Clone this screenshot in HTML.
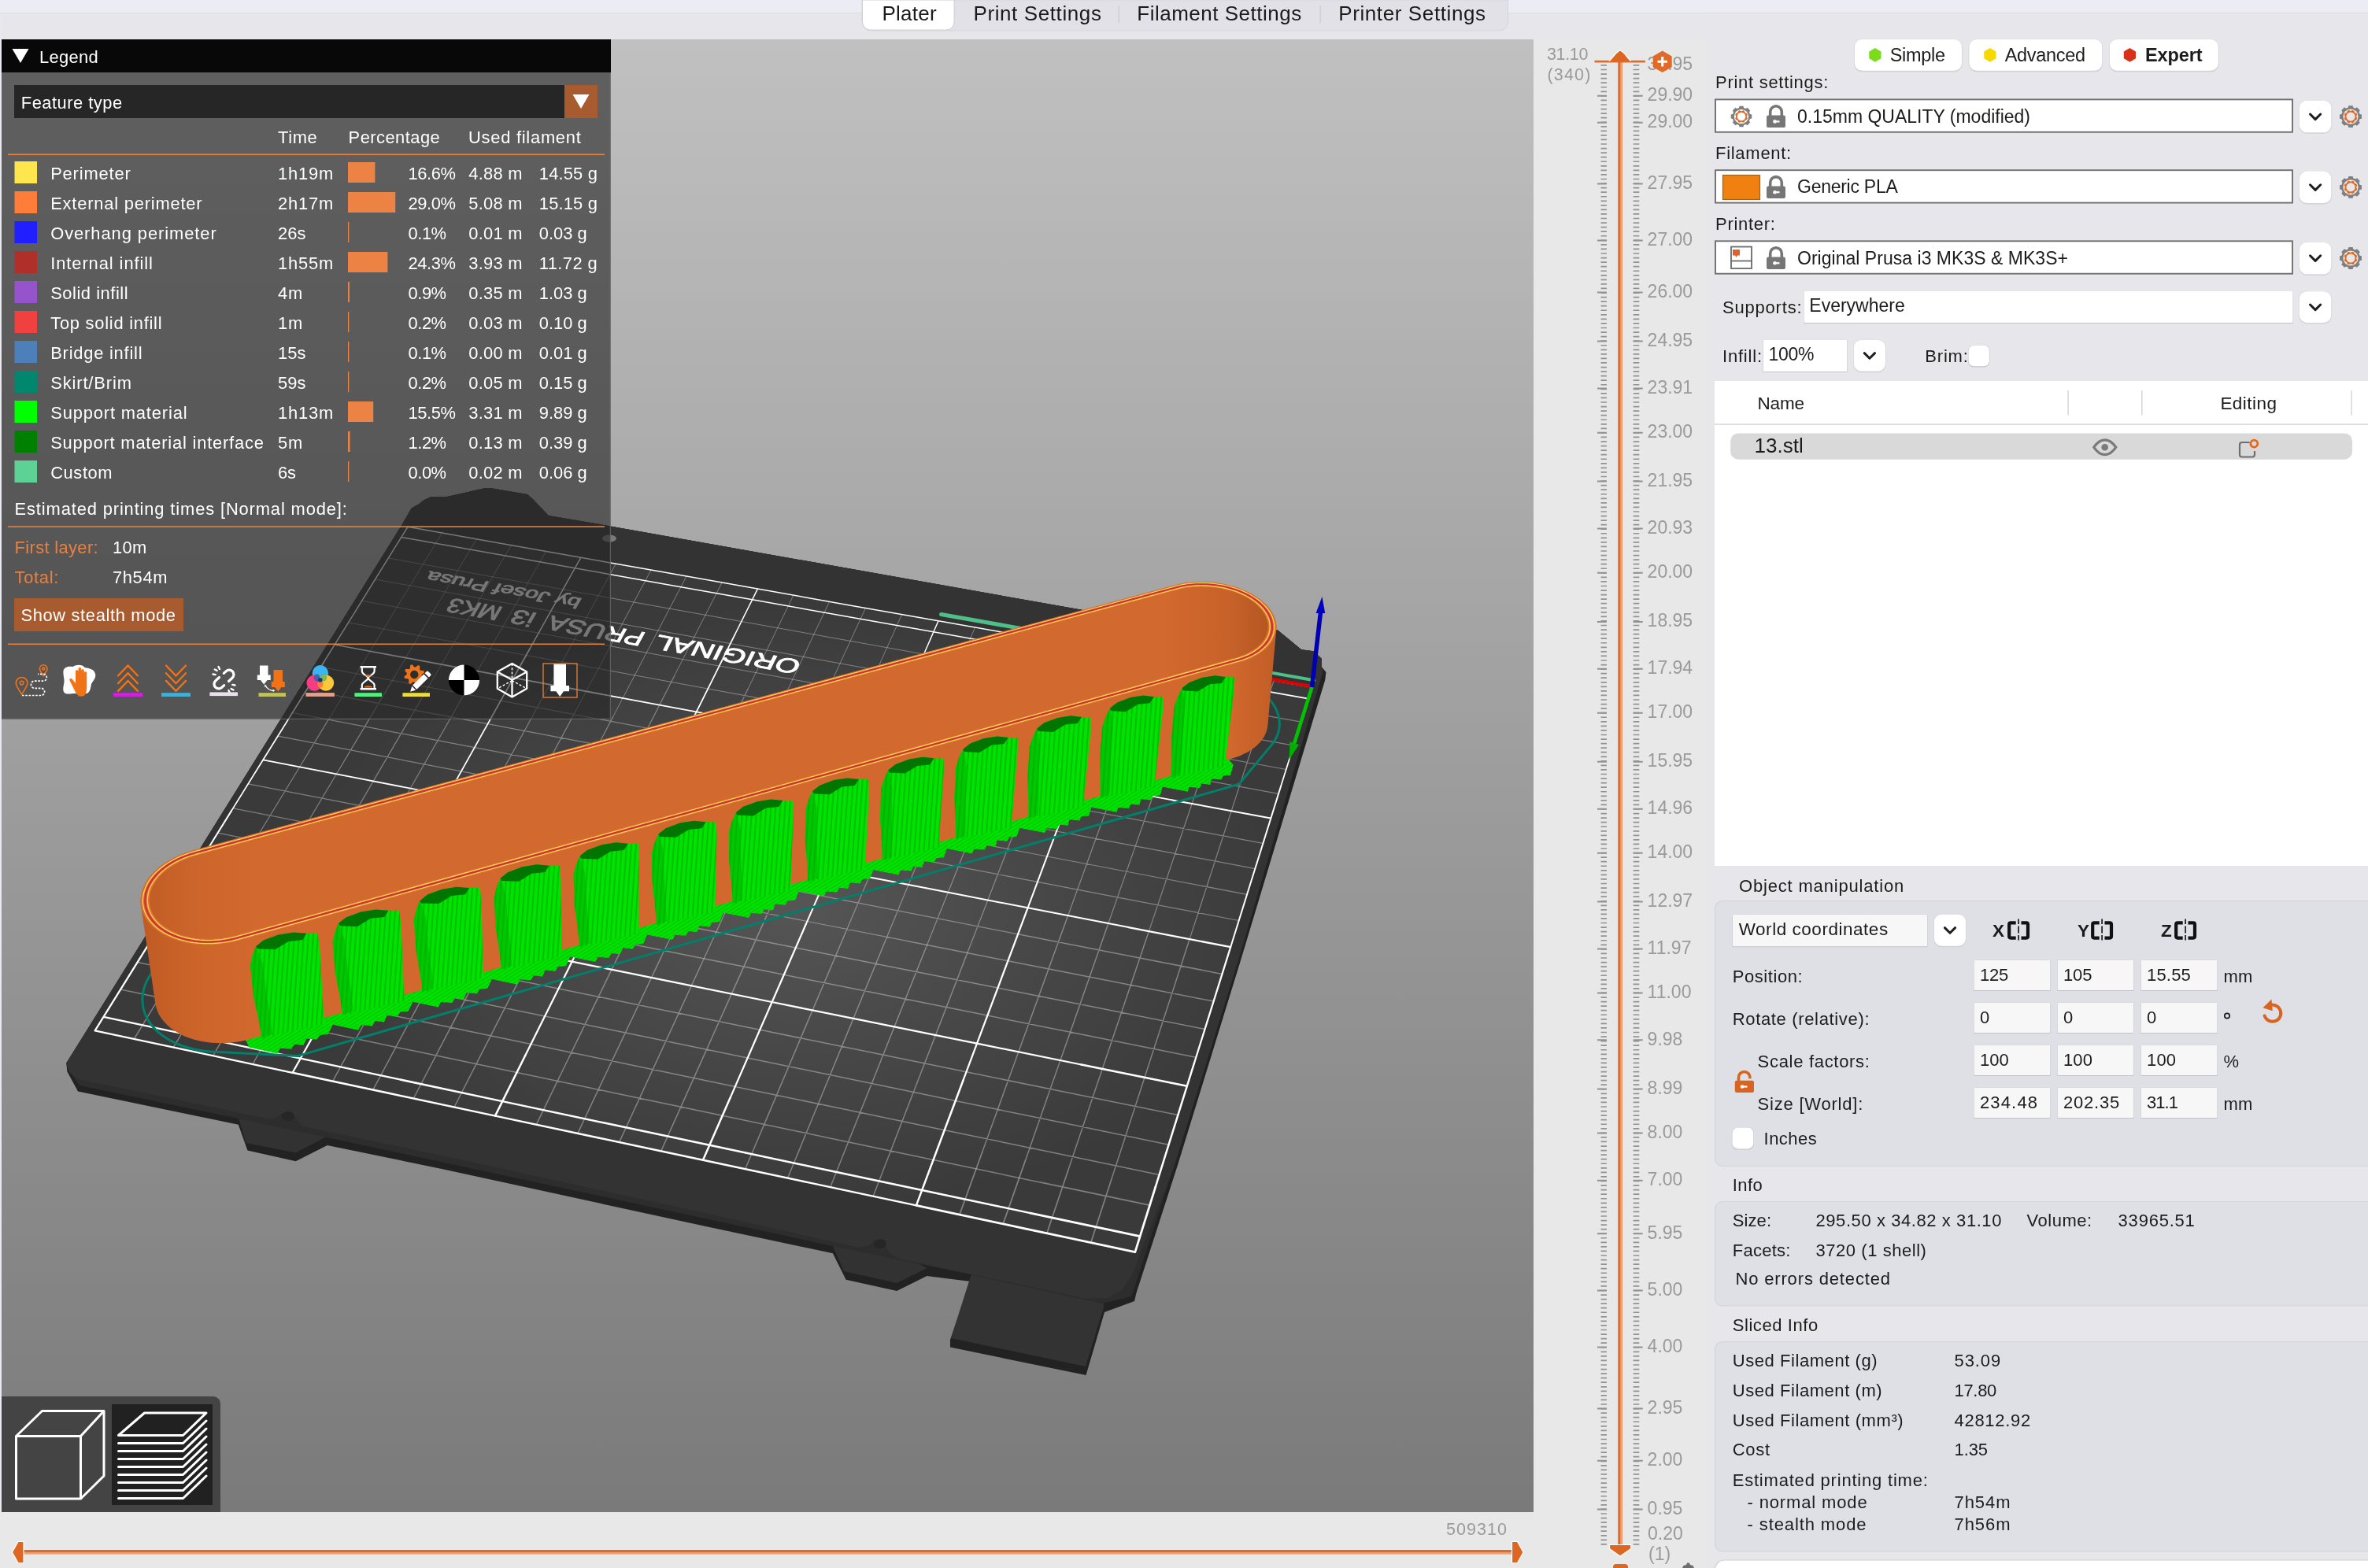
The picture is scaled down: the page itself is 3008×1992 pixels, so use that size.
<!DOCTYPE html><html><head><meta charset="utf-8"><title>PrusaSlicer</title>
<style>html{margin:0;padding:0;background:#e6e6eb}body{margin:0;padding:0;background:#e6e6eb;width:3008px;height:1992px;overflow:hidden;position:relative;font-family:"Liberation Sans",sans-serif}svg{position:absolute;left:0;top:0;will-change:transform}svg text{font-family:"Liberation Sans",sans-serif;white-space:pre}</style></head><body>
<svg width="3008" height="1992" viewBox="0 0 3008 1992">
<rect x="0" y="17" width="2" height="1975" fill="#e8e8ee"/>
<rect x="0.0" y="0.0" width="3008.0" height="17.0" rx="0.0" fill="#ececf4" />
<rect x="0.0" y="16.0" width="3008.0" height="1.2" rx="0.0" fill="#dcdce3" />
<path d="M1095 0H1915.5V28a11 11 0 0 1 -11 11H1106a11 11 0 0 1 -11 -11Z" fill="#e1e1e7" stroke="#d4d4da" stroke-width="1"/>
<path d="M1095.5 0H1212V28a10 10 0 0 1 -10 10H1105.5a10 10 0 0 1 -10 -10Z" fill="#ffffff" stroke="#cfcfd4" stroke-width="1"/>
<text x="1120.4" y="25.8" font-size="26.00" fill="#1b1b1b" letter-spacing="0.279">Plater</text>
<text x="1236.5" y="25.8" font-size="26.00" fill="#1b1b1b" letter-spacing="0.597">Print Settings</text>
<text x="1444.3" y="25.8" font-size="26.00" fill="#1b1b1b" letter-spacing="0.501">Filament Settings</text>
<text x="1700.2" y="25.8" font-size="26.00" fill="#1b1b1b" letter-spacing="0.609">Printer Settings</text>
<rect x="1420.5" y="7.0" width="1.5" height="22.0" rx="0.0" fill="#cfcfd5" />
<rect x="1676.5" y="7.0" width="1.5" height="22.0" rx="0.0" fill="#cfcfd5" />
<rect x="0.0" y="1921.0" width="1948.0" height="71.0" rx="0.0" fill="#e8e8e8" />
<rect x="28.0" y="1969.0" width="1895.0" height="3.0" rx="0.0" fill="#e06a26" />
<rect x="28.0" y="1972.0" width="1895.0" height="2.6" rx="0.0" fill="#f0a070" />
<path d="M30 1958.500H23L15.500 1972L23 1985.500H30Z" fill="#dd6622" stroke="#fff" stroke-width="1.200"/>
<path d="M1920.500 1958.500H1927.500L1935 1972L1927.500 1985.500H1920.500Z" fill="#dd6622" stroke="#fff" stroke-width="1.200"/>
<text x="1837.0" y="1950.0" font-size="21.50" fill="#9a9a9a" letter-spacing="1.043">509310</text>
<rect x="1948.0" y="50.0" width="220.0" height="1942.0" rx="0.0" fill="#e8e8e8" />
<path d="M2033.500 82.96H2041M2074.700 82.96H2082.300M2033.500 88.52H2041M2074.700 88.52H2082.300M2033.500 94.08H2041M2074.700 94.08H2082.300M2033.500 99.64H2041M2074.700 99.64H2082.300M2033.500 105.20H2041M2074.700 105.20H2082.300M2033.500 110.75H2041M2074.700 110.75H2082.300M2033.500 116.31H2041M2074.700 116.31H2082.300M2033.500 121.87H2041M2074.700 121.87H2082.300M2033.500 127.43H2041M2074.700 127.43H2082.300M2033.500 132.99H2041M2074.700 132.99H2082.300M2033.500 138.55H2041M2074.700 138.55H2082.300M2033.500 144.11H2041M2074.700 144.11H2082.300M2033.500 149.67H2041M2074.700 149.67H2082.300M2033.500 155.23H2041M2074.700 155.23H2082.300M2033.500 160.79H2041M2074.700 160.79H2082.300M2033.500 166.34H2041M2074.700 166.34H2082.300M2033.500 171.90H2041M2074.700 171.90H2082.300M2033.500 177.46H2041M2074.700 177.46H2082.300M2033.500 183.02H2041M2074.700 183.02H2082.300M2033.500 188.58H2041M2074.700 188.58H2082.300M2033.500 194.14H2041M2074.700 194.14H2082.300M2033.500 199.70H2041M2074.700 199.70H2082.300M2033.500 205.26H2041M2074.700 205.26H2082.300M2033.500 210.82H2041M2074.700 210.82H2082.300M2033.500 216.38H2041M2074.700 216.38H2082.300M2033.500 221.93H2041M2074.700 221.93H2082.300M2033.500 227.49H2041M2074.700 227.49H2082.300M2033.500 233.05H2041M2074.700 233.05H2082.300M2033.500 238.61H2041M2074.700 238.61H2082.300M2033.500 244.17H2041M2074.700 244.17H2082.300M2033.500 249.73H2041M2074.700 249.73H2082.300M2033.500 255.29H2041M2074.700 255.29H2082.300M2033.500 260.85H2041M2074.700 260.85H2082.300M2033.500 266.41H2041M2074.700 266.41H2082.300M2033.500 271.97H2041M2074.700 271.97H2082.300M2033.500 277.52H2041M2074.700 277.52H2082.300M2033.500 283.08H2041M2074.700 283.08H2082.300M2033.500 288.64H2041M2074.700 288.64H2082.300M2033.500 294.20H2041M2074.700 294.20H2082.300M2033.500 299.76H2041M2074.700 299.76H2082.300M2033.500 305.32H2041M2074.700 305.32H2082.300M2033.500 310.88H2041M2074.700 310.88H2082.300M2033.500 316.44H2041M2074.700 316.44H2082.300M2033.500 322.00H2041M2074.700 322.00H2082.300M2033.500 327.56H2041M2074.700 327.56H2082.300M2033.500 333.11H2041M2074.700 333.11H2082.300M2033.500 338.67H2041M2074.700 338.67H2082.300M2033.500 344.23H2041M2074.700 344.23H2082.300M2033.500 349.79H2041M2074.700 349.79H2082.300M2033.500 355.35H2041M2074.700 355.35H2082.300M2033.500 360.91H2041M2074.700 360.91H2082.300M2033.500 366.47H2041M2074.700 366.47H2082.300M2033.500 372.03H2041M2074.700 372.03H2082.300M2033.500 377.59H2041M2074.700 377.59H2082.300M2033.500 383.15H2041M2074.700 383.15H2082.300M2033.500 388.70H2041M2074.700 388.70H2082.300M2033.500 394.26H2041M2074.700 394.26H2082.300M2033.500 399.82H2041M2074.700 399.82H2082.300M2033.500 405.38H2041M2074.700 405.38H2082.300M2033.500 410.94H2041M2074.700 410.94H2082.300M2033.500 416.50H2041M2074.700 416.50H2082.300M2033.500 422.06H2041M2074.700 422.06H2082.300M2033.500 427.62H2041M2074.700 427.62H2082.300M2033.500 433.18H2041M2074.700 433.18H2082.300M2033.500 438.74H2041M2074.700 438.74H2082.300M2033.500 444.29H2041M2074.700 444.29H2082.300M2033.500 449.85H2041M2074.700 449.85H2082.300M2033.500 455.41H2041M2074.700 455.41H2082.300M2033.500 460.97H2041M2074.700 460.97H2082.300M2033.500 466.53H2041M2074.700 466.53H2082.300M2033.500 472.09H2041M2074.700 472.09H2082.300M2033.500 477.65H2041M2074.700 477.65H2082.300M2033.500 483.21H2041M2074.700 483.21H2082.300M2033.500 488.77H2041M2074.700 488.77H2082.300M2033.500 494.32H2041M2074.700 494.32H2082.300M2033.500 499.88H2041M2074.700 499.88H2082.300M2033.500 505.44H2041M2074.700 505.44H2082.300M2033.500 511.00H2041M2074.700 511.00H2082.300M2033.500 516.56H2041M2074.700 516.56H2082.300M2033.500 522.12H2041M2074.700 522.12H2082.300M2033.500 527.68H2041M2074.700 527.68H2082.300M2033.500 533.24H2041M2074.700 533.24H2082.300M2033.500 538.80H2041M2074.700 538.80H2082.300M2033.500 544.36H2041M2074.700 544.36H2082.300M2033.500 549.91H2041M2074.700 549.91H2082.300M2033.500 555.47H2041M2074.700 555.47H2082.300M2033.500 561.03H2041M2074.700 561.03H2082.300M2033.500 566.59H2041M2074.700 566.59H2082.300M2033.500 572.15H2041M2074.700 572.15H2082.300M2033.500 577.71H2041M2074.700 577.71H2082.300M2033.500 583.27H2041M2074.700 583.27H2082.300M2033.500 588.83H2041M2074.700 588.83H2082.300M2033.500 594.39H2041M2074.700 594.39H2082.300M2033.500 599.95H2041M2074.700 599.95H2082.300M2033.500 605.51H2041M2074.700 605.51H2082.300M2033.500 611.06H2041M2074.700 611.06H2082.300M2033.500 616.62H2041M2074.700 616.62H2082.300M2033.500 622.18H2041M2074.700 622.18H2082.300M2033.500 627.74H2041M2074.700 627.74H2082.300M2033.500 633.30H2041M2074.700 633.30H2082.300M2033.500 638.86H2041M2074.700 638.86H2082.300M2033.500 644.42H2041M2074.700 644.42H2082.300M2033.500 649.98H2041M2074.700 649.98H2082.300M2033.500 655.54H2041M2074.700 655.54H2082.300M2033.500 661.10H2041M2074.700 661.10H2082.300M2033.500 666.65H2041M2074.700 666.65H2082.300M2033.500 672.21H2041M2074.700 672.21H2082.300M2033.500 677.77H2041M2074.700 677.77H2082.300M2033.500 683.33H2041M2074.700 683.33H2082.300M2033.500 688.89H2041M2074.700 688.89H2082.300M2033.500 694.45H2041M2074.700 694.45H2082.300M2033.500 700.01H2041M2074.700 700.01H2082.300M2033.500 705.57H2041M2074.700 705.57H2082.300M2033.500 711.13H2041M2074.700 711.13H2082.300M2033.500 716.68H2041M2074.700 716.68H2082.300M2033.500 722.24H2041M2074.700 722.24H2082.300M2033.500 727.80H2041M2074.700 727.80H2082.300M2033.500 733.36H2041M2074.700 733.36H2082.300M2033.500 738.92H2041M2074.700 738.92H2082.300M2033.500 744.48H2041M2074.700 744.48H2082.300M2033.500 750.04H2041M2074.700 750.04H2082.300M2033.500 755.60H2041M2074.700 755.60H2082.300M2033.500 761.16H2041M2074.700 761.16H2082.300M2033.500 766.72H2041M2074.700 766.72H2082.300M2033.500 772.28H2041M2074.700 772.28H2082.300M2033.500 777.83H2041M2074.700 777.83H2082.300M2033.500 783.39H2041M2074.700 783.39H2082.300M2033.500 788.95H2041M2074.700 788.95H2082.300M2033.500 794.51H2041M2074.700 794.51H2082.300M2033.500 800.07H2041M2074.700 800.07H2082.300M2033.500 805.63H2041M2074.700 805.63H2082.300M2033.500 811.19H2041M2074.700 811.19H2082.300M2033.500 816.75H2041M2074.700 816.75H2082.300M2033.500 822.31H2041M2074.700 822.31H2082.300M2033.500 827.87H2041M2074.700 827.87H2082.300M2033.500 833.42H2041M2074.700 833.42H2082.300M2033.500 838.98H2041M2074.700 838.98H2082.300M2033.500 844.54H2041M2074.700 844.54H2082.300M2033.500 850.10H2041M2074.700 850.10H2082.300M2033.500 855.66H2041M2074.700 855.66H2082.300M2033.500 861.22H2041M2074.700 861.22H2082.300M2033.500 866.78H2041M2074.700 866.78H2082.300M2033.500 872.34H2041M2074.700 872.34H2082.300M2033.500 877.90H2041M2074.700 877.90H2082.300M2033.500 883.45H2041M2074.700 883.45H2082.300M2033.500 889.01H2041M2074.700 889.01H2082.300M2033.500 894.57H2041M2074.700 894.57H2082.300M2033.500 900.13H2041M2074.700 900.13H2082.300M2033.500 905.69H2041M2074.700 905.69H2082.300M2033.500 911.25H2041M2074.700 911.25H2082.300M2033.500 916.81H2041M2074.700 916.81H2082.300M2033.500 922.37H2041M2074.700 922.37H2082.300M2033.500 927.93H2041M2074.700 927.93H2082.300M2033.500 933.49H2041M2074.700 933.49H2082.300M2033.500 939.05H2041M2074.700 939.05H2082.300M2033.500 944.60H2041M2074.700 944.60H2082.300M2033.500 950.16H2041M2074.700 950.16H2082.300M2033.500 955.72H2041M2074.700 955.72H2082.300M2033.500 961.28H2041M2074.700 961.28H2082.300M2033.500 966.84H2041M2074.700 966.84H2082.300M2033.500 972.40H2041M2074.700 972.40H2082.300M2033.500 977.96H2041M2074.700 977.96H2082.300M2033.500 983.52H2041M2074.700 983.52H2082.300M2033.500 989.08H2041M2074.700 989.08H2082.300M2033.500 994.63H2041M2074.700 994.63H2082.300M2033.500 1000.19H2041M2074.700 1000.19H2082.300M2033.500 1005.75H2041M2074.700 1005.75H2082.300M2033.500 1011.31H2041M2074.700 1011.31H2082.300M2033.500 1016.87H2041M2074.700 1016.87H2082.300M2033.500 1022.43H2041M2074.700 1022.43H2082.300M2033.500 1027.99H2041M2074.700 1027.99H2082.300M2033.500 1033.55H2041M2074.700 1033.55H2082.300M2033.500 1039.11H2041M2074.700 1039.11H2082.300M2033.500 1044.67H2041M2074.700 1044.67H2082.300M2033.500 1050.23H2041M2074.700 1050.23H2082.300M2033.500 1055.78H2041M2074.700 1055.78H2082.300M2033.500 1061.34H2041M2074.700 1061.34H2082.300M2033.500 1066.90H2041M2074.700 1066.90H2082.300M2033.500 1072.46H2041M2074.700 1072.46H2082.300M2033.500 1078.02H2041M2074.700 1078.02H2082.300M2033.500 1083.58H2041M2074.700 1083.58H2082.300M2033.500 1089.14H2041M2074.700 1089.14H2082.300M2033.500 1094.70H2041M2074.700 1094.70H2082.300M2033.500 1100.26H2041M2074.700 1100.26H2082.300M2033.500 1105.82H2041M2074.700 1105.82H2082.300M2033.500 1111.37H2041M2074.700 1111.37H2082.300M2033.500 1116.93H2041M2074.700 1116.93H2082.300M2033.500 1122.49H2041M2074.700 1122.49H2082.300M2033.500 1128.05H2041M2074.700 1128.05H2082.300M2033.500 1133.61H2041M2074.700 1133.61H2082.300M2033.500 1139.17H2041M2074.700 1139.17H2082.300M2033.500 1144.73H2041M2074.700 1144.73H2082.300M2033.500 1150.29H2041M2074.700 1150.29H2082.300M2033.500 1155.85H2041M2074.700 1155.85H2082.300M2033.500 1161.41H2041M2074.700 1161.41H2082.300M2033.500 1166.96H2041M2074.700 1166.96H2082.300M2033.500 1172.52H2041M2074.700 1172.52H2082.300M2033.500 1178.08H2041M2074.700 1178.08H2082.300M2033.500 1183.64H2041M2074.700 1183.64H2082.300M2033.500 1189.20H2041M2074.700 1189.20H2082.300M2033.500 1194.76H2041M2074.700 1194.76H2082.300M2033.500 1200.32H2041M2074.700 1200.32H2082.300M2033.500 1205.88H2041M2074.700 1205.88H2082.300M2033.500 1211.44H2041M2074.700 1211.44H2082.300M2033.500 1217.00H2041M2074.700 1217.00H2082.300M2033.500 1222.55H2041M2074.700 1222.55H2082.300M2033.500 1228.11H2041M2074.700 1228.11H2082.300M2033.500 1233.67H2041M2074.700 1233.67H2082.300M2033.500 1239.23H2041M2074.700 1239.23H2082.300M2033.500 1244.79H2041M2074.700 1244.79H2082.300M2033.500 1250.35H2041M2074.700 1250.35H2082.300M2033.500 1255.91H2041M2074.700 1255.91H2082.300M2033.500 1261.47H2041M2074.700 1261.47H2082.300M2033.500 1267.03H2041M2074.700 1267.03H2082.300M2033.500 1272.59H2041M2074.700 1272.59H2082.300M2033.500 1278.14H2041M2074.700 1278.14H2082.300M2033.500 1283.70H2041M2074.700 1283.70H2082.300M2033.500 1289.26H2041M2074.700 1289.26H2082.300M2033.500 1294.82H2041M2074.700 1294.82H2082.300M2033.500 1300.38H2041M2074.700 1300.38H2082.300M2033.500 1305.94H2041M2074.700 1305.94H2082.300M2033.500 1311.50H2041M2074.700 1311.50H2082.300M2033.500 1317.06H2041M2074.700 1317.06H2082.300M2033.500 1322.62H2041M2074.700 1322.62H2082.300M2033.500 1328.18H2041M2074.700 1328.18H2082.300M2033.500 1333.73H2041M2074.700 1333.73H2082.300M2033.500 1339.29H2041M2074.700 1339.29H2082.300M2033.500 1344.85H2041M2074.700 1344.85H2082.300M2033.500 1350.41H2041M2074.700 1350.41H2082.300M2033.500 1355.97H2041M2074.700 1355.97H2082.300M2033.500 1361.53H2041M2074.700 1361.53H2082.300M2033.500 1367.09H2041M2074.700 1367.09H2082.300M2033.500 1372.65H2041M2074.700 1372.65H2082.300M2033.500 1378.21H2041M2074.700 1378.21H2082.300M2033.500 1383.77H2041M2074.700 1383.77H2082.300M2033.500 1389.32H2041M2074.700 1389.32H2082.300M2033.500 1394.88H2041M2074.700 1394.88H2082.300M2033.500 1400.44H2041M2074.700 1400.44H2082.300M2033.500 1406.00H2041M2074.700 1406.00H2082.300M2033.500 1411.56H2041M2074.700 1411.56H2082.300M2033.500 1417.12H2041M2074.700 1417.12H2082.300M2033.500 1422.68H2041M2074.700 1422.68H2082.300M2033.500 1428.24H2041M2074.700 1428.24H2082.300M2033.500 1433.80H2041M2074.700 1433.80H2082.300M2033.500 1439.36H2041M2074.700 1439.36H2082.300M2033.500 1444.91H2041M2074.700 1444.91H2082.300M2033.500 1450.47H2041M2074.700 1450.47H2082.300M2033.500 1456.03H2041M2074.700 1456.03H2082.300M2033.500 1461.59H2041M2074.700 1461.59H2082.300M2033.500 1467.15H2041M2074.700 1467.15H2082.300M2033.500 1472.71H2041M2074.700 1472.71H2082.300M2033.500 1478.27H2041M2074.700 1478.27H2082.300M2033.500 1483.83H2041M2074.700 1483.83H2082.300M2033.500 1489.39H2041M2074.700 1489.39H2082.300M2033.500 1494.95H2041M2074.700 1494.95H2082.300M2033.500 1500.50H2041M2074.700 1500.50H2082.300M2033.500 1506.06H2041M2074.700 1506.06H2082.300M2033.500 1511.62H2041M2074.700 1511.62H2082.300M2033.500 1517.18H2041M2074.700 1517.18H2082.300M2033.500 1522.74H2041M2074.700 1522.74H2082.300M2033.500 1528.30H2041M2074.700 1528.30H2082.300M2033.500 1533.86H2041M2074.700 1533.86H2082.300M2033.500 1539.42H2041M2074.700 1539.42H2082.300M2033.500 1544.98H2041M2074.700 1544.98H2082.300M2033.500 1550.54H2041M2074.700 1550.54H2082.300M2033.500 1556.09H2041M2074.700 1556.09H2082.300M2033.500 1561.65H2041M2074.700 1561.65H2082.300M2033.500 1567.21H2041M2074.700 1567.21H2082.300M2033.500 1572.77H2041M2074.700 1572.77H2082.300M2033.500 1578.33H2041M2074.700 1578.33H2082.300M2033.500 1583.89H2041M2074.700 1583.89H2082.300M2033.500 1589.45H2041M2074.700 1589.45H2082.300M2033.500 1595.01H2041M2074.700 1595.01H2082.300M2033.500 1600.57H2041M2074.700 1600.57H2082.300M2033.500 1606.12H2041M2074.700 1606.12H2082.300M2033.500 1611.68H2041M2074.700 1611.68H2082.300M2033.500 1617.24H2041M2074.700 1617.24H2082.300M2033.500 1622.80H2041M2074.700 1622.80H2082.300M2033.500 1628.36H2041M2074.700 1628.36H2082.300M2033.500 1633.92H2041M2074.700 1633.92H2082.300M2033.500 1639.48H2041M2074.700 1639.48H2082.300M2033.500 1645.04H2041M2074.700 1645.04H2082.300M2033.500 1650.60H2041M2074.700 1650.60H2082.300M2033.500 1656.16H2041M2074.700 1656.16H2082.300M2033.500 1661.72H2041M2074.700 1661.72H2082.300M2033.500 1667.27H2041M2074.700 1667.27H2082.300M2033.500 1672.83H2041M2074.700 1672.83H2082.300M2033.500 1678.39H2041M2074.700 1678.39H2082.300M2033.500 1683.95H2041M2074.700 1683.95H2082.300M2033.500 1689.51H2041M2074.700 1689.51H2082.300M2033.500 1695.07H2041M2074.700 1695.07H2082.300M2033.500 1700.63H2041M2074.700 1700.63H2082.300M2033.500 1706.19H2041M2074.700 1706.19H2082.300M2033.500 1711.75H2041M2074.700 1711.75H2082.300M2033.500 1717.31H2041M2074.700 1717.31H2082.300M2033.500 1722.86H2041M2074.700 1722.86H2082.300M2033.500 1728.42H2041M2074.700 1728.42H2082.300M2033.500 1733.98H2041M2074.700 1733.98H2082.300M2033.500 1739.54H2041M2074.700 1739.54H2082.300M2033.500 1745.10H2041M2074.700 1745.10H2082.300M2033.500 1750.66H2041M2074.700 1750.66H2082.300M2033.500 1756.22H2041M2074.700 1756.22H2082.300M2033.500 1761.78H2041M2074.700 1761.78H2082.300M2033.500 1767.34H2041M2074.700 1767.34H2082.300M2033.500 1772.90H2041M2074.700 1772.90H2082.300M2033.500 1778.45H2041M2074.700 1778.45H2082.300M2033.500 1784.01H2041M2074.700 1784.01H2082.300M2033.500 1789.57H2041M2074.700 1789.57H2082.300M2033.500 1795.13H2041M2074.700 1795.13H2082.300M2033.500 1800.69H2041M2074.700 1800.69H2082.300M2033.500 1806.25H2041M2074.700 1806.25H2082.300M2033.500 1811.81H2041M2074.700 1811.81H2082.300M2033.500 1817.37H2041M2074.700 1817.37H2082.300M2033.500 1822.93H2041M2074.700 1822.93H2082.300M2033.500 1828.49H2041M2074.700 1828.49H2082.300M2033.500 1834.04H2041M2074.700 1834.04H2082.300M2033.500 1839.60H2041M2074.700 1839.60H2082.300M2033.500 1845.16H2041M2074.700 1845.16H2082.300M2033.500 1850.72H2041M2074.700 1850.72H2082.300M2033.500 1856.28H2041M2074.700 1856.28H2082.300M2033.500 1861.84H2041M2074.700 1861.84H2082.300M2033.500 1867.40H2041M2074.700 1867.40H2082.300M2033.500 1872.96H2041M2074.700 1872.96H2082.300M2033.500 1878.52H2041M2074.700 1878.52H2082.300M2033.500 1884.08H2041M2074.700 1884.08H2082.300M2033.500 1889.63H2041M2074.700 1889.63H2082.300M2033.500 1895.19H2041M2074.700 1895.19H2082.300M2033.500 1900.75H2041M2074.700 1900.75H2082.300M2033.500 1906.31H2041M2074.700 1906.31H2082.300M2033.500 1911.87H2041M2074.700 1911.87H2082.300M2033.500 1917.43H2041M2074.700 1917.43H2082.300M2033.500 1922.99H2041M2074.700 1922.99H2082.300M2033.500 1928.55H2041M2074.700 1928.55H2082.300M2033.500 1934.11H2041M2074.700 1934.11H2082.300M2033.500 1939.67H2041M2074.700 1939.67H2082.300M2033.500 1945.22H2041M2074.700 1945.22H2082.300M2033.500 1950.78H2041M2074.700 1950.78H2082.300M2033.500 1956.34H2041M2074.700 1956.34H2082.300M2033.500 1961.90H2041M2074.700 1961.90H2082.300" stroke="#929292" stroke-width="1.700" fill="none"/>
<path d="M2029 121.8H2041M2074.700 121.8H2086.700M2029 155.8H2041M2074.700 155.8H2086.700M2029 233.6H2041M2074.700 233.6H2086.700M2029 305.5H2041M2074.700 305.5H2086.700M2029 371.6H2041M2074.700 371.6H2086.700M2029 433.4H2041M2074.700 433.4H2086.700M2029 493.4H2041M2074.700 493.4H2086.700M2029 549.7H2041M2074.700 549.7H2086.700M2029 611.5H2041M2074.700 611.5H2086.700M2029 671.5H2041M2074.700 671.5H2086.700M2029 727.8H2041M2074.700 727.8H2086.700M2029 790.0H2041M2074.700 790.0H2086.700M2029 849.7H2041M2074.700 849.7H2086.700M2029 905.7H2041M2074.700 905.7H2086.700M2029 967.8H2041M2074.700 967.8H2086.700M2029 1027.7H2041M2074.700 1027.7H2086.700M2029 1083.8H2041M2074.700 1083.8H2086.700M2029 1145.6H2041M2074.700 1145.6H2086.700M2029 1205.6H2041M2074.700 1205.6H2086.700M2029 1261.6H2041M2074.700 1261.6H2086.700M2029 1321.3H2041M2074.700 1321.3H2086.700M2029 1383.4H2041M2074.700 1383.4H2086.700M2029 1439.4H2041M2074.700 1439.4H2086.700M2029 1499.7H2041M2074.700 1499.7H2086.700M2029 1567.3H2041M2074.700 1567.3H2086.700M2029 1639.6H2041M2074.700 1639.6H2086.700M2029 1711.5H2041M2074.700 1711.5H2086.700M2029 1789.5H2041M2074.700 1789.5H2086.700M2029 1855.7H2041M2074.700 1855.7H2086.700M2029 1917.5H2041M2074.700 1917.5H2086.700" stroke="#929292" stroke-width="2" fill="none"/>
<text x="2092.6" y="89.4" font-size="23.00" fill="#9a9a9a">30.95</text>
<text x="2092.6" y="128.2" font-size="23.00" fill="#9a9a9a">29.90</text>
<text x="2092.6" y="162.2" font-size="23.00" fill="#9a9a9a">29.00</text>
<text x="2092.6" y="240.0" font-size="23.00" fill="#9a9a9a">27.95</text>
<text x="2092.6" y="311.9" font-size="23.00" fill="#9a9a9a">27.00</text>
<text x="2092.6" y="378.0" font-size="23.00" fill="#9a9a9a">26.00</text>
<text x="2092.6" y="439.8" font-size="23.00" fill="#9a9a9a">24.95</text>
<text x="2092.6" y="499.8" font-size="23.00" fill="#9a9a9a">23.91</text>
<text x="2092.6" y="556.1" font-size="23.00" fill="#9a9a9a">23.00</text>
<text x="2092.6" y="617.9" font-size="23.00" fill="#9a9a9a">21.95</text>
<text x="2092.6" y="677.9" font-size="23.00" fill="#9a9a9a">20.93</text>
<text x="2092.6" y="734.2" font-size="23.00" fill="#9a9a9a">20.00</text>
<text x="2092.6" y="796.4" font-size="23.00" fill="#9a9a9a">18.95</text>
<text x="2092.6" y="856.1" font-size="23.00" fill="#9a9a9a">17.94</text>
<text x="2092.6" y="912.1" font-size="23.00" fill="#9a9a9a">17.00</text>
<text x="2092.6" y="974.2" font-size="23.00" fill="#9a9a9a">15.95</text>
<text x="2092.6" y="1034.1" font-size="23.00" fill="#9a9a9a">14.96</text>
<text x="2092.6" y="1090.2" font-size="23.00" fill="#9a9a9a">14.00</text>
<text x="2092.6" y="1152.0" font-size="23.00" fill="#9a9a9a">12.97</text>
<text x="2092.6" y="1212.0" font-size="23.00" fill="#9a9a9a">11.97</text>
<text x="2092.6" y="1268.0" font-size="23.00" fill="#9a9a9a">11.00</text>
<text x="2092.6" y="1327.7" font-size="23.00" fill="#9a9a9a">9.98</text>
<text x="2092.6" y="1389.8" font-size="23.00" fill="#9a9a9a">8.99</text>
<text x="2092.6" y="1445.8" font-size="23.00" fill="#9a9a9a">8.00</text>
<text x="2092.6" y="1506.1" font-size="23.00" fill="#9a9a9a">7.00</text>
<text x="2092.6" y="1573.7" font-size="23.00" fill="#9a9a9a">5.95</text>
<text x="2092.6" y="1646.0" font-size="23.00" fill="#9a9a9a">5.00</text>
<text x="2092.6" y="1717.9" font-size="23.00" fill="#9a9a9a">4.00</text>
<text x="2092.6" y="1795.9" font-size="23.00" fill="#9a9a9a">2.95</text>
<text x="2092.6" y="1862.1" font-size="23.00" fill="#9a9a9a">2.00</text>
<text x="2092.6" y="1923.9" font-size="23.00" fill="#9a9a9a">0.95</text>
<text x="2093.0" y="1955.8" font-size="23.00" fill="#9a9a9a">0.20</text>
<text x="2094.0" y="1981.5" font-size="23.00" fill="#9a9a9a">(1)</text>
<text x="1965.0" y="75.8" font-size="21.50" fill="#9a9a9a" letter-spacing="-0.360">31.10</text>
<text x="1965.5" y="102.3" font-size="21.50" fill="#9a9a9a" letter-spacing="1.162">(340)</text>
<rect x="2055.3" y="78.0" width="3.4" height="1886.0" rx="0.0" fill="#e06a26" />
<rect x="2058.7" y="78.0" width="2.5" height="1886.0" rx="0.0" fill="#f0a070" />
<rect x="2025.5" y="76.8" width="64.5" height="2.4" rx="0.0" fill="#e06a26" />
<path d="M2043.500 78.500L2052.500 68L2058 63.500L2063.500 68L2072 78.500Z" fill="#dd6622" stroke="#fff" stroke-width="1.200"/>
<rect x="2026.0" y="77.6" width="64.0" height="1.7" rx="0.0" fill="#e06a26" />
<polygon points="2111.7,92.1 2099.7,85.2 2099.7,71.4 2111.7,64.5 2123.7,71.4 2123.7,85.2" fill="#e06a26"/>
<path d="M2105.500 78.300H2117.900M2111.700 72.100V84.500" stroke="#fff" stroke-width="3" fill="none"/>
<path d="M2044.500 1962.500H2071.700V1967.500L2058 1977L2044.500 1967.500Z" fill="#dd6622" stroke="#fff" stroke-width="1.200"/>
<path d="M2049 1992v-1a4 4 0 0 1 4 -4h11a4 4 0 0 1 4 4v1Z" fill="#dd6622"/>
<path d="M2137 1992l1.500-3 3.500-1 1-2.500h3l1 2.500 3.500 1 1.500 3Z" fill="#6e6e6e"/>
<rect x="2168.0" y="17.0" width="840.0" height="1975.0" rx="0.0" fill="#e6e6eb" />
<rect x="2355.0" y="49.7" width="137.8" height="41.8" rx="10.4" fill="#cdcdd4" fill-opacity="0.8"/>
<rect x="2355.8" y="50.0" width="136.2" height="39.8" rx="9.6" fill="#ffffff" />
<polygon points="2381.9,78.7 2374.3,74.3 2374.3,65.5 2381.9,61.1 2389.5,65.5 2389.5,74.3" fill="#7bdc1c"/>
<text x="2400.7" y="77.6" font-size="23.50" fill="#1c1c1c" letter-spacing="-0.306">Simple</text>
<rect x="2500.6" y="49.7" width="170.5" height="41.8" rx="10.4" fill="#cdcdd4" fill-opacity="0.8"/>
<rect x="2501.4" y="50.0" width="168.9" height="39.8" rx="9.6" fill="#ffffff" />
<polygon points="2527.9,78.7 2520.3,74.3 2520.3,65.5 2527.9,61.1 2535.5,65.5 2535.5,74.3" fill="#f7d800"/>
<text x="2546.7" y="77.6" font-size="23.50" fill="#1c1c1c" letter-spacing="-0.291">Advanced</text>
<rect x="2678.9" y="49.7" width="139.7" height="41.8" rx="10.4" fill="#cdcdd4" fill-opacity="0.8"/>
<rect x="2679.7" y="50.0" width="138.1" height="39.8" rx="9.6" fill="#ffffff" />
<polygon points="2705.4,78.7 2697.8,74.3 2697.8,65.5 2705.4,61.1 2713.0,65.5 2713.0,74.3" fill="#d9301a"/>
<text x="2725.0" y="77.6" font-size="23.50" fill="#1c1c1c" letter-spacing="-0.107" font-weight="bold">Expert</text>
<text x="2179.0" y="112.0" font-size="22.00" fill="#1c1c1c" letter-spacing="0.720">Print settings:</text>
<rect x="2179.0" y="126.4" width="733.0" height="41.4" rx="0.0" fill="#ffffff" stroke="#707070" stroke-width="1.9" />
<path d="M2248.7 147.6v-5.500a7.300 7.300 0 0 1 14.600 0v5.500" fill="none" stroke="#767676" stroke-width="3.600"/>
<rect x="2244.0" y="146.6" width="24.0" height="15.5" rx="2.2" fill="#767676" />
<circle cx="2254.5" cy="154.4" r="2.300" fill="#fff"/><rect x="2254.5" y="153.3" width="6" height="2.200" fill="#fff"/>
<text x="2283.0" y="155.9" font-size="23.00" fill="#1c1c1c" letter-spacing="-0.005">0.15mm QUALITY (modified)</text>
<rect x="2920.0" y="127.5" width="42.1" height="42.5" rx="10.4" fill="#cfcfd6" fill-opacity="0.75"/>
<rect x="2920.8" y="127.8" width="40.5" height="40.5" rx="9.6" fill="#ffffff" />
<path d="M2934.5 145.0L2941.1 151.6L2947.7 145.0" fill="none" stroke="#1e1e1e" stroke-width="3" stroke-linecap="round" stroke-linejoin="round"/>
<path d="M2982.80 136.53 L2983.32 134.16 L2988.68 134.16 L2989.20 136.53 L2991.91 137.66 L2993.96 136.34 L2997.76 140.14 L2996.44 142.19 L2997.57 144.90 L2999.94 145.42 L2999.94 150.78 L2997.57 151.30 L2996.44 154.01 L2997.76 156.06 L2993.96 159.86 L2991.91 158.54 L2989.20 159.67 L2988.68 162.04 L2983.32 162.04 L2982.80 159.67 L2980.09 158.54 L2978.04 159.86 L2974.24 156.06 L2975.56 154.01 L2974.43 151.30 L2972.06 150.78 L2972.06 145.42 L2974.43 144.90 L2975.56 142.19 L2974.24 140.14 L2978.04 136.34 L2980.09 137.66Z" fill="#7f7f7f"/>
<circle cx="2986.0" cy="148.1" r="9.60" fill="#e6e6eb"/>
<path d="M2986.00 140.90 L2986.73 140.73 L2987.54 140.35 L2988.44 140.07 L2989.29 140.15 L2989.96 140.70 L2990.39 141.53 L2990.70 142.38 L2991.09 143.01 L2991.72 143.40 L2992.57 143.71 L2993.40 144.14 L2993.95 144.81 L2994.03 145.66 L2993.75 146.56 L2993.37 147.37 L2993.20 148.10 L2993.37 148.83 L2993.75 149.64 L2994.03 150.54 L2993.95 151.39 L2993.40 152.06 L2992.57 152.49 L2991.72 152.80 L2991.09 153.19 L2990.70 153.82 L2990.39 154.67 L2989.96 155.50 L2989.29 156.05 L2988.44 156.13 L2987.54 155.85 L2986.73 155.47 L2986.00 155.30 L2985.27 155.47 L2984.46 155.85 L2983.56 156.13 L2982.71 156.05 L2982.04 155.50 L2981.61 154.67 L2981.30 153.82 L2980.91 153.19 L2980.28 152.80 L2979.43 152.49 L2978.60 152.06 L2978.05 151.39 L2977.97 150.54 L2978.25 149.64 L2978.63 148.83 L2978.80 148.10 L2978.63 147.37 L2978.25 146.56 L2977.97 145.66 L2978.05 144.81 L2978.60 144.14 L2979.43 143.71 L2980.28 143.40 L2980.91 143.01 L2981.30 142.38 L2981.61 141.53 L2982.04 140.70 L2982.71 140.15 L2983.56 140.07 L2984.46 140.35 L2985.27 140.73Z" fill="#e5681e"/>
<circle cx="2986.0" cy="148.1" r="5.60" fill="#e6e6eb"/>
<path d="M2208.96 137.01 L2209.45 134.75 L2214.55 134.75 L2215.04 137.01 L2217.62 138.08 L2219.57 136.83 L2223.17 140.43 L2221.92 142.38 L2222.99 144.96 L2225.25 145.45 L2225.25 150.55 L2222.99 151.04 L2221.92 153.62 L2223.17 155.57 L2219.57 159.17 L2217.62 157.92 L2215.04 158.99 L2214.55 161.25 L2209.45 161.25 L2208.96 158.99 L2206.38 157.92 L2204.43 159.17 L2200.83 155.57 L2202.08 153.62 L2201.01 151.04 L2198.75 150.55 L2198.75 145.45 L2201.01 144.96 L2202.08 142.38 L2200.83 140.43 L2204.43 136.83 L2206.38 138.08Z" fill="#7f7f7f"/>
<circle cx="2212.0" cy="148.0" r="9.12" fill="#ffffff"/>
<path d="M2212.00 141.16 L2212.69 141.00 L2213.46 140.64 L2214.32 140.37 L2215.13 140.45 L2215.76 140.97 L2216.17 141.76 L2216.46 142.56 L2216.84 143.16 L2217.44 143.54 L2218.24 143.83 L2219.03 144.24 L2219.55 144.87 L2219.63 145.68 L2219.36 146.54 L2219.00 147.31 L2218.84 148.00 L2219.00 148.69 L2219.36 149.46 L2219.63 150.32 L2219.55 151.13 L2219.03 151.76 L2218.24 152.17 L2217.44 152.46 L2216.84 152.84 L2216.46 153.44 L2216.17 154.24 L2215.76 155.03 L2215.13 155.55 L2214.32 155.63 L2213.46 155.36 L2212.69 155.00 L2212.00 154.84 L2211.31 155.00 L2210.54 155.36 L2209.68 155.63 L2208.87 155.55 L2208.24 155.03 L2207.83 154.24 L2207.54 153.44 L2207.16 152.84 L2206.56 152.46 L2205.76 152.17 L2204.97 151.76 L2204.45 151.13 L2204.37 150.32 L2204.64 149.46 L2205.00 148.69 L2205.16 148.00 L2205.00 147.31 L2204.64 146.54 L2204.37 145.68 L2204.45 144.87 L2204.97 144.24 L2205.76 143.83 L2206.56 143.54 L2207.16 143.16 L2207.54 142.56 L2207.83 141.76 L2208.24 140.97 L2208.87 140.45 L2209.68 140.37 L2210.54 140.64 L2211.31 141.00Z" fill="#e5681e"/>
<circle cx="2212.0" cy="148.0" r="5.32" fill="#ffffff"/>
<text x="2179.0" y="201.5" font-size="22.00" fill="#1c1c1c" letter-spacing="0.720">Filament:</text>
<rect x="2179.0" y="216.2" width="733.0" height="41.4" rx="0.0" fill="#ffffff" stroke="#707070" stroke-width="1.9" />
<path d="M2248.7 237.4v-5.500a7.300 7.300 0 0 1 14.600 0v5.500" fill="none" stroke="#767676" stroke-width="3.600"/>
<rect x="2244.0" y="236.4" width="24.0" height="15.5" rx="2.2" fill="#767676" />
<circle cx="2254.5" cy="244.2" r="2.300" fill="#fff"/><rect x="2254.5" y="243.1" width="6" height="2.200" fill="#fff"/>
<text x="2283.0" y="245.4" font-size="23.00" fill="#1c1c1c" letter-spacing="-0.264">Generic PLA</text>
<rect x="2920.0" y="217.3" width="42.1" height="42.5" rx="10.4" fill="#cfcfd6" fill-opacity="0.75"/>
<rect x="2920.8" y="217.6" width="40.5" height="40.5" rx="9.6" fill="#ffffff" />
<path d="M2934.5 234.8L2941.1 241.4L2947.7 234.8" fill="none" stroke="#1e1e1e" stroke-width="3" stroke-linecap="round" stroke-linejoin="round"/>
<path d="M2982.80 226.33 L2983.32 223.96 L2988.68 223.96 L2989.20 226.33 L2991.91 227.46 L2993.96 226.14 L2997.76 229.94 L2996.44 231.99 L2997.57 234.70 L2999.94 235.22 L2999.94 240.58 L2997.57 241.10 L2996.44 243.81 L2997.76 245.86 L2993.96 249.66 L2991.91 248.34 L2989.20 249.47 L2988.68 251.84 L2983.32 251.84 L2982.80 249.47 L2980.09 248.34 L2978.04 249.66 L2974.24 245.86 L2975.56 243.81 L2974.43 241.10 L2972.06 240.58 L2972.06 235.22 L2974.43 234.70 L2975.56 231.99 L2974.24 229.94 L2978.04 226.14 L2980.09 227.46Z" fill="#7f7f7f"/>
<circle cx="2986.0" cy="237.9" r="9.60" fill="#e6e6eb"/>
<path d="M2986.00 230.70 L2986.73 230.53 L2987.54 230.15 L2988.44 229.87 L2989.29 229.95 L2989.96 230.50 L2990.39 231.33 L2990.70 232.18 L2991.09 232.81 L2991.72 233.20 L2992.57 233.51 L2993.40 233.94 L2993.95 234.61 L2994.03 235.46 L2993.75 236.36 L2993.37 237.17 L2993.20 237.90 L2993.37 238.63 L2993.75 239.44 L2994.03 240.34 L2993.95 241.19 L2993.40 241.86 L2992.57 242.29 L2991.72 242.60 L2991.09 242.99 L2990.70 243.62 L2990.39 244.47 L2989.96 245.30 L2989.29 245.85 L2988.44 245.93 L2987.54 245.65 L2986.73 245.27 L2986.00 245.10 L2985.27 245.27 L2984.46 245.65 L2983.56 245.93 L2982.71 245.85 L2982.04 245.30 L2981.61 244.47 L2981.30 243.62 L2980.91 242.99 L2980.28 242.60 L2979.43 242.29 L2978.60 241.86 L2978.05 241.19 L2977.97 240.34 L2978.25 239.44 L2978.63 238.63 L2978.80 237.90 L2978.63 237.17 L2978.25 236.36 L2977.97 235.46 L2978.05 234.61 L2978.60 233.94 L2979.43 233.51 L2980.28 233.20 L2980.91 232.81 L2981.30 232.18 L2981.61 231.33 L2982.04 230.50 L2982.71 229.95 L2983.56 229.87 L2984.46 230.15 L2985.27 230.53Z" fill="#e5681e"/>
<circle cx="2986.0" cy="237.9" r="5.60" fill="#e6e6eb"/>
<rect x="2188.5" y="222.5" width="47.0" height="31.0" rx="0.0" fill="#f08010" stroke="#9a6422" stroke-width="1.2" />
<text x="2179.0" y="291.6" font-size="22.00" fill="#1c1c1c" letter-spacing="0.720">Printer:</text>
<rect x="2179.0" y="306.3" width="733.0" height="41.4" rx="0.0" fill="#ffffff" stroke="#707070" stroke-width="1.9" />
<path d="M2248.7 327.5v-5.500a7.300 7.300 0 0 1 14.600 0v5.500" fill="none" stroke="#767676" stroke-width="3.600"/>
<rect x="2244.0" y="326.5" width="24.0" height="15.5" rx="2.2" fill="#767676" />
<circle cx="2254.5" cy="334.3" r="2.300" fill="#fff"/><rect x="2254.5" y="333.2" width="6" height="2.200" fill="#fff"/>
<text x="2283.0" y="335.7" font-size="23.00" fill="#1c1c1c" letter-spacing="0.025">Original Prusa i3 MK3S &amp; MK3S+</text>
<rect x="2920.0" y="307.4" width="42.1" height="42.5" rx="10.4" fill="#cfcfd6" fill-opacity="0.75"/>
<rect x="2920.8" y="307.7" width="40.5" height="40.5" rx="9.6" fill="#ffffff" />
<path d="M2934.5 324.8L2941.1 331.4L2947.7 324.8" fill="none" stroke="#1e1e1e" stroke-width="3" stroke-linecap="round" stroke-linejoin="round"/>
<path d="M2982.80 316.43 L2983.32 314.06 L2988.68 314.06 L2989.20 316.43 L2991.91 317.56 L2993.96 316.24 L2997.76 320.04 L2996.44 322.09 L2997.57 324.80 L2999.94 325.32 L2999.94 330.68 L2997.57 331.20 L2996.44 333.91 L2997.76 335.96 L2993.96 339.76 L2991.91 338.44 L2989.20 339.57 L2988.68 341.94 L2983.32 341.94 L2982.80 339.57 L2980.09 338.44 L2978.04 339.76 L2974.24 335.96 L2975.56 333.91 L2974.43 331.20 L2972.06 330.68 L2972.06 325.32 L2974.43 324.80 L2975.56 322.09 L2974.24 320.04 L2978.04 316.24 L2980.09 317.56Z" fill="#7f7f7f"/>
<circle cx="2986.0" cy="328.0" r="9.60" fill="#e6e6eb"/>
<path d="M2986.00 320.80 L2986.73 320.63 L2987.54 320.25 L2988.44 319.97 L2989.29 320.05 L2989.96 320.60 L2990.39 321.43 L2990.70 322.28 L2991.09 322.91 L2991.72 323.30 L2992.57 323.61 L2993.40 324.04 L2993.95 324.71 L2994.03 325.56 L2993.75 326.46 L2993.37 327.27 L2993.20 328.00 L2993.37 328.73 L2993.75 329.54 L2994.03 330.44 L2993.95 331.29 L2993.40 331.96 L2992.57 332.39 L2991.72 332.70 L2991.09 333.09 L2990.70 333.72 L2990.39 334.57 L2989.96 335.40 L2989.29 335.95 L2988.44 336.03 L2987.54 335.75 L2986.73 335.37 L2986.00 335.20 L2985.27 335.37 L2984.46 335.75 L2983.56 336.03 L2982.71 335.95 L2982.04 335.40 L2981.61 334.57 L2981.30 333.72 L2980.91 333.09 L2980.28 332.70 L2979.43 332.39 L2978.60 331.96 L2978.05 331.29 L2977.97 330.44 L2978.25 329.54 L2978.63 328.73 L2978.80 328.00 L2978.63 327.27 L2978.25 326.46 L2977.97 325.56 L2978.05 324.71 L2978.60 324.04 L2979.43 323.61 L2980.28 323.30 L2980.91 322.91 L2981.30 322.28 L2981.61 321.43 L2982.04 320.60 L2982.71 320.05 L2983.56 319.97 L2984.46 320.25 L2985.27 320.63Z" fill="#e5681e"/>
<circle cx="2986.0" cy="328.0" r="5.60" fill="#e6e6eb"/>
<rect x="2199.0" y="313.5" width="26.0" height="27.5" rx="0.0" fill="#ffffff" stroke="#6a6a6a" stroke-width="1.8" />
<path d="M2198 331.500H2226" stroke="#6a6a6a" stroke-width="1.800"/>
<path d="M2201 317h9v7.500h-3l-1.500 2.200 -1.500-2.200h-3Z" fill="#e0622a"/>
<text x="2188.0" y="398.0" font-size="22.00" fill="#1c1c1c" letter-spacing="0.800">Supports:</text>
<rect x="2291.0" y="369.2" width="622.0" height="41.8" rx="1.5" fill="#c2c2c8" />
<rect x="2291.5" y="369.5" width="621.0" height="40.5" rx="1.0" fill="#ffffff" />
<text x="2298.3" y="396.3" font-size="23.00" fill="#1c1c1c" letter-spacing="0.006">Everywhere</text>
<rect x="2920.0" y="370.0" width="42.1" height="41.6" rx="10.4" fill="#cfcfd6" fill-opacity="0.75"/>
<rect x="2920.8" y="370.3" width="40.5" height="39.6" rx="9.6" fill="#ffffff" />
<path d="M2934.5 387.0L2941.1 393.6L2947.7 387.0" fill="none" stroke="#1e1e1e" stroke-width="3" stroke-linecap="round" stroke-linejoin="round"/>
<text x="2188.0" y="460.2" font-size="22.00" fill="#1c1c1c" letter-spacing="0.800">Infill:</text>
<rect x="2239.3" y="431.2" width="107.5" height="41.8" rx="1.5" fill="#c2c2c8" />
<rect x="2239.8" y="431.5" width="106.5" height="40.5" rx="1.0" fill="#ffffff" />
<text x="2246.5" y="458.3" font-size="23.00" fill="#1c1c1c" letter-spacing="-0.332">100%</text>
<rect x="2354.0" y="431.7" width="41.8" height="41.5" rx="10.4" fill="#cfcfd6" fill-opacity="0.75"/>
<rect x="2354.8" y="432.0" width="40.2" height="39.5" rx="9.6" fill="#ffffff" />
<path d="M2368.3 448.6L2374.9 455.2L2381.5 448.6" fill="none" stroke="#1e1e1e" stroke-width="3" stroke-linecap="round" stroke-linejoin="round"/>
<text x="2445.3" y="460.2" font-size="22.00" fill="#1c1c1c" letter-spacing="0.800">Brim:</text>
<rect x="2499.9" y="438.4" width="27.7" height="28.0" rx="7.4" fill="#c4c4ca" />
<rect x="2500.5" y="438.7" width="26.5" height="26.5" rx="7.0" fill="#ffffff" />
<rect x="2178.0" y="484.0" width="830.0" height="616.0" rx="0.0" fill="#ffffff" />
<text x="2232.4" y="520.2" font-size="22.50" fill="#1c1c1c" letter-spacing="-0.129">Name</text>
<text x="2820.4" y="520.2" font-size="22.50" fill="#1c1c1c" letter-spacing="0.458">Editing</text>
<rect x="2626.3" y="496.0" width="1.6" height="31.5" rx="0.0" fill="#d9d9dc" />
<rect x="2720.0" y="496.0" width="1.6" height="31.5" rx="0.0" fill="#d9d9dc" />
<rect x="2986.3" y="496.0" width="1.6" height="31.5" rx="0.0" fill="#d9d9dc" />
<rect x="2178.0" y="538.2" width="830.0" height="1.8" rx="0.0" fill="#dedee0" />
<rect x="2198.2" y="550.4" width="789.8" height="33.4" rx="10.0" fill="#d9d9d9" />
<text x="2228.4" y="575.4" font-size="26.00" fill="#1c1c1c" letter-spacing="0.059">13.stl</text>
<path d="M2659.700 568.200C2664.500 561 2669 558.800 2673.700 558.800C2678.400 558.800 2683 561 2687.800 568.200C2683 575.400 2678.400 577.600 2673.700 577.600C2669 577.600 2664.500 575.400 2659.700 568.200Z" fill="none" stroke="#7a7a7a" stroke-width="3.200"/><circle cx="2673.700" cy="568.200" r="4.300" fill="#7a7a7a"/>
<path d="M2857.500 562H2848a3 3 0 0 0 -3 3V577.500a3 3 0 0 0 3 3H2861a3 3 0 0 0 3-3V573" fill="none" stroke="#6e6e6e" stroke-width="2.200"/>
<circle cx="2863.300" cy="563.600" r="4.500" fill="none" stroke="#e5681e" stroke-width="2.800"/>
<text x="2209.0" y="1132.6" font-size="22.00" fill="#1c1c1c" letter-spacing="0.819">Object manipulation</text>
<rect x="2178.5" y="1144.5" width="860.0" height="337.0" rx="10.0" fill="#dfe0e6" stroke="#d3d4da" stroke-width="1.2" />
<rect x="2200.5" y="1161.4" width="248.2" height="41.9" rx="1.5" fill="#c2c2c8" />
<rect x="2201.0" y="1161.7" width="247.2" height="40.6" rx="1.0" fill="#f7f7f7" />
<text x="2208.7" y="1188.2" font-size="22.50" fill="#1c1c1c" letter-spacing="0.535">World coordinates</text>
<rect x="2456.1" y="1161.4" width="41.8" height="42.0" rx="10.4" fill="#cfcfd6" fill-opacity="0.75"/>
<rect x="2456.9" y="1161.7" width="40.2" height="40.0" rx="9.6" fill="#ffffff" />
<path d="M2470.4 1178.6L2477.0 1185.2L2483.6 1178.6" fill="none" stroke="#1e1e1e" stroke-width="3" stroke-linecap="round" stroke-linejoin="round"/>
<text x="2531.0" y="1190.2" font-size="22.50" fill="#1a1a1a" font-weight="bold">X</text>
<path d="M2560.7 1172.4H2554.2a2 2 0 0 0 -2 2V1189.6a2 2 0 0 0 2 2H2560.7M2567.5 1172.4H2574.0a2 2 0 0 1 2 2V1189.6a2 2 0 0 1 -2 2H2567.5" fill="none" stroke="#111" stroke-width="4.200"/>
<path d="M2564.1 1167.4V1196.6" stroke="#111" stroke-width="1.600" stroke-dasharray="6.500 2.600 9 2.600 6.500 9" fill="none"/>
<text x="2639.0" y="1190.2" font-size="22.50" fill="#1a1a1a" font-weight="bold">Y</text>
<path d="M2666.7 1172.4H2660.2a2 2 0 0 0 -2 2V1189.6a2 2 0 0 0 2 2H2666.7M2673.5 1172.4H2680.0a2 2 0 0 1 2 2V1189.6a2 2 0 0 1 -2 2H2673.5" fill="none" stroke="#111" stroke-width="4.200"/>
<path d="M2670.1 1167.4V1196.6" stroke="#111" stroke-width="1.600" stroke-dasharray="6.500 2.600 9 2.600 6.500 9" fill="none"/>
<text x="2745.1" y="1190.2" font-size="22.50" fill="#1a1a1a" font-weight="bold">Z</text>
<path d="M2772.7 1172.4H2766.2a2 2 0 0 0 -2 2V1189.6a2 2 0 0 0 2 2H2772.7M2779.5 1172.4H2786.0a2 2 0 0 1 2 2V1189.6a2 2 0 0 1 -2 2H2779.5" fill="none" stroke="#111" stroke-width="4.200"/>
<path d="M2776.1 1167.4V1196.6" stroke="#111" stroke-width="1.600" stroke-dasharray="6.500 2.600 9 2.600 6.500 9" fill="none"/>
<text x="2200.7" y="1247.6" font-size="22.00" fill="#1c1c1c" letter-spacing="0.569">Position:</text>
<rect x="2507.0" y="1219.4" width="97.7" height="39.5" rx="1.5" fill="#c2c2c8" />
<rect x="2507.5" y="1219.7" width="96.7" height="38.2" rx="1.0" fill="#f7f7f7" />
<text x="2514.9" y="1245.8" font-size="22.00" fill="#1c1c1c" letter-spacing="-0.168">125</text>
<rect x="2613.1" y="1219.4" width="97.7" height="39.5" rx="1.5" fill="#c2c2c8" />
<rect x="2613.6" y="1219.7" width="96.7" height="38.2" rx="1.0" fill="#f7f7f7" />
<text x="2621.0" y="1245.8" font-size="22.00" fill="#1c1c1c" letter-spacing="-0.168">105</text>
<rect x="2719.2" y="1219.4" width="97.7" height="39.5" rx="1.5" fill="#c2c2c8" />
<rect x="2719.7" y="1219.7" width="96.7" height="38.2" rx="1.0" fill="#f7f7f7" />
<text x="2727.1" y="1245.8" font-size="22.00" fill="#1c1c1c" letter-spacing="0.150">15.55</text>
<text x="2824.6" y="1247.6" font-size="22.00" fill="#1c1c1c">mm</text>
<text x="2200.7" y="1301.6" font-size="22.00" fill="#1c1c1c" letter-spacing="0.660">Rotate (relative):</text>
<rect x="2507.0" y="1273.4" width="97.7" height="39.5" rx="1.5" fill="#c2c2c8" />
<rect x="2507.5" y="1273.7" width="96.7" height="38.2" rx="1.0" fill="#f7f7f7" />
<text x="2514.9" y="1299.8" font-size="22.00" fill="#1c1c1c">0</text>
<rect x="2613.1" y="1273.4" width="97.7" height="39.5" rx="1.5" fill="#c2c2c8" />
<rect x="2613.6" y="1273.7" width="96.7" height="38.2" rx="1.0" fill="#f7f7f7" />
<text x="2621.0" y="1299.8" font-size="22.00" fill="#1c1c1c">0</text>
<rect x="2719.2" y="1273.4" width="97.7" height="39.5" rx="1.5" fill="#c2c2c8" />
<rect x="2719.7" y="1273.7" width="96.7" height="38.2" rx="1.0" fill="#f7f7f7" />
<text x="2727.1" y="1299.8" font-size="22.00" fill="#1c1c1c">0</text>
<text x="2232.6" y="1355.6" font-size="22.00" fill="#1c1c1c" letter-spacing="0.694">Scale factors:</text>
<rect x="2507.0" y="1327.4" width="97.7" height="39.5" rx="1.5" fill="#c2c2c8" />
<rect x="2507.5" y="1327.7" width="96.7" height="38.2" rx="1.0" fill="#f7f7f7" />
<text x="2514.9" y="1353.8" font-size="22.00" fill="#1c1c1c" letter-spacing="0.099">100</text>
<rect x="2613.1" y="1327.4" width="97.7" height="39.5" rx="1.5" fill="#c2c2c8" />
<rect x="2613.6" y="1327.7" width="96.7" height="38.2" rx="1.0" fill="#f7f7f7" />
<text x="2621.0" y="1353.8" font-size="22.00" fill="#1c1c1c" letter-spacing="0.099">100</text>
<rect x="2719.2" y="1327.4" width="97.7" height="39.5" rx="1.5" fill="#c2c2c8" />
<rect x="2719.7" y="1327.7" width="96.7" height="38.2" rx="1.0" fill="#f7f7f7" />
<text x="2727.1" y="1353.8" font-size="22.00" fill="#1c1c1c" letter-spacing="0.099">100</text>
<text x="2824.6" y="1355.6" font-size="22.00" fill="#1c1c1c">%</text>
<text x="2232.6" y="1409.6" font-size="22.00" fill="#1c1c1c" letter-spacing="0.785">Size [World]:</text>
<rect x="2507.0" y="1381.4" width="97.7" height="39.5" rx="1.5" fill="#c2c2c8" />
<rect x="2507.5" y="1381.7" width="96.7" height="38.2" rx="1.0" fill="#f7f7f7" />
<text x="2514.9" y="1407.8" font-size="22.00" fill="#1c1c1c" letter-spacing="1.169">234.48</text>
<rect x="2613.1" y="1381.4" width="97.7" height="39.5" rx="1.5" fill="#c2c2c8" />
<rect x="2613.6" y="1381.7" width="96.7" height="38.2" rx="1.0" fill="#f7f7f7" />
<text x="2621.0" y="1407.8" font-size="22.00" fill="#1c1c1c" letter-spacing="0.802">202.35</text>
<rect x="2719.2" y="1381.4" width="97.7" height="39.5" rx="1.5" fill="#c2c2c8" />
<rect x="2719.7" y="1381.7" width="96.7" height="38.2" rx="1.0" fill="#f7f7f7" />
<text x="2727.1" y="1407.8" font-size="22.00" fill="#1c1c1c" letter-spacing="-1.004">31.1</text>
<text x="2824.6" y="1409.6" font-size="22.00" fill="#1c1c1c">mm</text>
<circle cx="2829" cy="1290.500" r="3.200" fill="none" stroke="#1c1c1c" stroke-width="1.700"/>
<path d="M2880.500 1278.600A10.600 10.600 0 1 1 2876.600 1290.500" fill="none" stroke="#d9641f" stroke-width="4" stroke-linecap="round"/>
<path d="M2874.500 1280.200L2885.500 1269.500L2886.800 1284.200Z" fill="#d9641f"/>
<path d="M2208.500 1374v-5.300a7.200 7.200 0 0 1 14.400 0v1.500" fill="none" stroke="#d9641f" stroke-width="3.600"/>
<rect x="2203.8" y="1372.8" width="24.2" height="15.2" rx="2.2" fill="#d9641f" />
<circle cx="2213" cy="1380.500" r="2.300" fill="#fff"/><rect x="2213" y="1379.400" width="6.500" height="2.200" fill="#fff"/>
<rect x="2199.9" y="1432.3" width="28.0" height="28.3" rx="7.4" fill="#c4c4ca" />
<rect x="2200.5" y="1432.6" width="26.8" height="26.8" rx="7.0" fill="#ffffff" />
<text x="2240.6" y="1453.5" font-size="22.00" fill="#1c1c1c" letter-spacing="0.447">Inches</text>
<text x="2200.7" y="1513.3" font-size="22.00" fill="#1c1c1c" letter-spacing="0.451">Info</text>
<rect x="2178.5" y="1526.5" width="860.0" height="132.5" rx="10.0" fill="#dfe0e6" stroke="#d3d4da" stroke-width="1.2" />
<text x="2200.7" y="1558.0" font-size="22.00" fill="#1c1c1c" letter-spacing="0.118">Size:</text>
<text x="2306.5" y="1558.0" font-size="22.00" fill="#1c1c1c" letter-spacing="0.575">295.50 x 34.82 x 31.10</text>
<text x="2574.6" y="1558.0" font-size="22.00" fill="#1c1c1c" letter-spacing="0.501">Volume:</text>
<text x="2690.6" y="1558.0" font-size="22.00" fill="#1c1c1c" letter-spacing="0.781">33965.51</text>
<text x="2200.7" y="1596.0" font-size="22.00" fill="#1c1c1c" letter-spacing="0.267">Facets:</text>
<text x="2306.5" y="1596.0" font-size="22.00" fill="#1c1c1c" letter-spacing="0.550">3720 (1 shell)</text>
<text x="2204.4" y="1632.0" font-size="22.00" fill="#1c1c1c" letter-spacing="0.850">No errors detected</text>
<text x="2200.7" y="1691.0" font-size="22.00" fill="#1c1c1c" letter-spacing="0.570">Sliced Info</text>
<rect x="2178.5" y="1704.5" width="860.0" height="266.5" rx="10.0" fill="#dfe0e6" stroke="#d3d4da" stroke-width="1.2" />
<text x="2200.7" y="1735.7" font-size="22.00" fill="#1c1c1c" letter-spacing="0.569">Used Filament (g)</text>
<text x="2482.5" y="1735.7" font-size="22.00" fill="#1c1c1c" letter-spacing="0.890">53.09</text>
<text x="2200.7" y="1773.7" font-size="22.00" fill="#1c1c1c" letter-spacing="0.563">Used Filament (m)</text>
<text x="2482.5" y="1773.7" font-size="22.00" fill="#1c1c1c" letter-spacing="-0.310">17.80</text>
<text x="2200.7" y="1811.5" font-size="22.00" fill="#1c1c1c" letter-spacing="0.575">Used Filament (mm³)</text>
<text x="2482.5" y="1811.5" font-size="22.00" fill="#1c1c1c" letter-spacing="0.718">42812.92</text>
<text x="2200.7" y="1849.4" font-size="22.00" fill="#1c1c1c" letter-spacing="0.691">Cost</text>
<text x="2482.5" y="1849.4" font-size="22.00" fill="#1c1c1c" letter-spacing="-0.079">1.35</text>
<text x="2200.7" y="1887.8" font-size="22.00" fill="#1c1c1c" letter-spacing="0.797">Estimated printing time:</text>
<text x="2219.5" y="1915.7" font-size="22.00" fill="#1c1c1c" letter-spacing="0.859">- normal mode</text>
<text x="2482.5" y="1915.7" font-size="22.00" fill="#1c1c1c" letter-spacing="0.947">7h54m</text>
<text x="2219.5" y="1943.6" font-size="22.00" fill="#1c1c1c" letter-spacing="0.900">- stealth mode</text>
<text x="2482.5" y="1943.6" font-size="22.00" fill="#1c1c1c" letter-spacing="0.947">7h56m</text>
<rect x="2178.5" y="1982.0" width="860.0" height="40.0" rx="12.0" fill="#ffffff" stroke="#d0d0d6" stroke-width="1.2" />
</svg>
<svg id="scene" width="1946" height="1871" viewBox="2 50 1946 1871" style="position:absolute;left:2px;top:50px">
<defs>
<linearGradient id="bg" x1="0" y1="0" x2="0" y2="1"><stop offset="0" stop-color="#c0c0c0"/><stop offset="1" stop-color="#7a7a7a"/></linearGradient>
<radialGradient id="bedlight" gradientUnits="userSpaceOnUse" cx="1010" cy="1150" r="640" gradientTransform="translate(1010 1150) scale(1 0.6) rotate(12) translate(-1010 -1150)"><stop offset="0" stop-color="#fff" stop-opacity="0.14"/><stop offset="0.45" stop-color="#fff" stop-opacity="0.075"/><stop offset="1" stop-color="#fff" stop-opacity="0"/></radialGradient>
<linearGradient id="wallshade" gradientUnits="userSpaceOnUse" x1="180" y1="0" x2="330" y2="0"><stop offset="0" stop-color="#000" stop-opacity="0.10"/><stop offset="1" stop-color="#000" stop-opacity="0"/></linearGradient>
</defs>
<rect x="2" y="50" width="1946" height="1871" fill="url(#bg)"/>
<path d="M510.0 667.6 L522.8 645.6 L532.0 640.5 L538.0 635.5 L548.0 631.0 L568.0 631.0 L615.7 620.3 L624.0 620.3 L669.7 627.9 L676.5 633.8 L696.8 654.9 L775.2 668.4 L1360.0 772.3 L1560.0 808.0 L1623.0 800.4 L1653.0 825.3 L1668.4 827.2 L1678.9 836.8 L1678.9 847.3 L1684.5 854.0 L1683.2 864.0 L1576.0 1220.0 L1496.0 1480.0 L1443.5 1642.6 L1441.0 1653.0 L1403.0 1667.0 L1379.5 1747.0 L1207.0 1711.5 L1207.0 1702.0 L1233.0 1628.0 L1177.4 1621.0 L1139.2 1640.1 L1074.6 1625.7 L1057.9 1592.2 L900.0 1558.8 L560.0 1484.7 L415.8 1455.1 L375.7 1475.2 L314.4 1461.5 L302.8 1428.7 L99.0 1386.5 L85.3 1361.2 L84.3 1350.6Z" fill="#222222"/>
<path d="M302.8 1419.2 L312.3 1452.0 L375.7 1464.6 L415.8 1443.5 L395.0 1425.0Z" fill="#323232"/>
<path d="M1057.9 1583.0 L1072.0 1615.0 L1139.2 1630.0 L1177.4 1611.0 L1150.0 1595.0Z" fill="#323232"/>
<path d="M1236.0 1612.0 L1208.0 1700.0 L1379.0 1736.0 L1402.3 1660.0 L1400.0 1645.0Z" fill="#333333"/>
<path d="M510.0 667.6 L522.8 645.6 L532.0 640.5 L538.0 635.5 L548.0 631.0 L568.0 631.0 L615.7 620.3 L624.0 620.3 L669.7 627.9 L676.5 633.8 L696.8 654.9 L775.2 668.4 L1360.0 772.3 L1560.0 808.0 L1623.0 800.4 L1653.0 825.3 L1668.4 827.2 L1678.9 836.8 L1678.9 847.3 L1680.5 853.2 L1573.0 1220.0 L1492.0 1480.0 L1439.5 1640.0 L1437.0 1647.0 L1400.0 1656.0 L1236.0 1620.0 L1057.9 1583.0 L900.0 1549.0 L560.0 1476.0 L302.8 1421.0 L101.0 1379.0 L86.0 1358.0 L84.3 1350.6Z" fill="#2d2d2d"/>
<path d="M510.0 667.6 L522.8 645.6 L532.0 640.5 L538.0 635.5 L548.0 631.0 L568.0 631.0 L615.7 620.3 L624.0 620.3 L669.7 627.9 L676.5 633.8 L696.8 654.9 L775.2 668.4 L1360.0 772.3 L1560.0 808.0 L1623.0 800.4 L1653.0 825.3 L1668.4 827.2 L1678.9 836.8 L1678.9 847.3 L1680.5 853.2 L1573.0 1220.0 L1492.0 1480.0 L1437.5 1621.0 L1426.0 1637.7 L1407.0 1649.0 L1378.4 1649.6 L1144.0 1599.4 L1129.6 1592.2 L1124.0 1581.0 L1110.5 1575.5 L1104.0 1582.0 L1091.3 1585.1 L900.0 1542.0 L560.0 1467.8 L385.0 1430.9 L378.8 1425.6 L372.0 1416.0 L357.7 1415.0 L350.0 1419.5 L340.8 1421.4 L98.0 1370.7 L88.0 1362.0 L84.3 1350.6Z" fill="#333333"/>
<ellipse cx="366" cy="1418" rx="8" ry="6" fill="#262626"/>
<ellipse cx="1118" cy="1580" rx="8" ry="6" fill="#262626"/>
<ellipse cx="774" cy="684" rx="9" ry="4.5" fill="#7a7a7a"/>
<path d="M1666.5 873.0 L518.0 669.3 L120.6 1309.4 L1441.9 1590.6Z" fill="#3a3a3a"/>
<path d="M1666.5 873.0 L518.0 669.3 L120.6 1309.4 L1441.9 1590.6Z" fill="url(#bedlight)"/>
<text transform="matrix(-4.6173 -0.8368 1.4104 -2.8363 1019.60 839.50)" font-family="Liberation Sans, sans-serif" font-size="8.70" textLength="39.60" lengthAdjust="spacingAndGlyphs" stroke="#fff" stroke-width="0.28" fill="#ffffff">ORIGINAL</text>
<text transform="matrix(-4.5441 -0.8237 1.5139 -2.7933 821.72 803.95)" font-family="Liberation Sans, sans-serif" font-size="8.70" textLength="26.50" lengthAdjust="spacingAndGlyphs" stroke="#fff" stroke-width="0.28" fill="#ffffff">PRUSA</text>
<text transform="matrix(-4.5039 -0.8164 1.5705 -2.7697 683.24 779.15)" font-family="Liberation Sans, sans-serif" font-size="8.70" textLength="6.30" lengthAdjust="spacingAndGlyphs" stroke="#fff" stroke-width="0.28" fill="#ffffff">i3</text>
<text transform="matrix(-4.4772 -0.8117 1.6082 -2.7541 640.28 771.67)" font-family="Liberation Sans, sans-serif" font-size="8.70" textLength="14.80" lengthAdjust="spacingAndGlyphs" stroke="#fff" stroke-width="0.28" fill="#ffffff">MK3</text>
<text transform="matrix(-4.4604 -0.8023 1.5748 -2.7237 740.21 760.58)" font-family="Liberation Sans, sans-serif" font-size="6.60" textLength="43.50" lengthAdjust="spacingAndGlyphs" stroke="#fff" stroke-width="0.28" fill="#ffffff">by Josef Prusa</text>
<path d="M1521.9 847.4L1500.5 908.6M1474.1 838.9L1452.0 899.9M1379.2 822.1L1355.8 882.5M1332.1 813.7L1308.1 873.9M1285.2 805.4L1260.5 865.3M1238.5 797.1L1213.1 856.8M1145.6 780.6L1119.1 839.8M1119.1 839.8L1091.7 900.8M1099.5 772.4L1072.3 831.4M1072.3 831.4L1044.4 892.1M1053.6 764.3L1025.8 823.0M1025.8 823.0L997.2 883.5M1007.9 756.2L979.5 814.7M979.5 814.7L950.3 874.8M917.1 740.1L887.5 798.1M887.5 798.1L857.1 857.7M872.0 732.1L841.8 789.8M841.8 789.8L810.8 849.2M810.8 849.2L778.8 910.4M827.1 724.1L796.3 781.6M796.3 781.6L764.7 840.8M764.7 840.8L732.1 901.7M782.3 716.2L751.0 773.4M751.0 773.4L718.8 832.3M718.8 832.3L685.6 893.0M693.5 700.4L661.0 757.2M661.0 757.2L627.6 815.6M627.6 815.6L593.2 875.8M649.3 692.6L616.3 749.1M616.3 749.1L582.3 807.3M582.3 807.3L547.4 867.2M605.4 684.8L571.8 741.1M571.8 741.1L537.2 799.0M537.2 799.0L501.7 858.7M561.6 677.0L527.5 733.1M527.5 733.1L492.4 790.8M492.4 790.8L456.2 850.2M456.2 850.2L419.0 911.3M1530.9 895.3L1410.4 873.7M1410.4 873.7L1291.3 852.3M1291.3 852.3L1173.5 831.1M1173.5 831.1L1057.0 810.2M1057.0 810.2L941.8 789.5M941.8 789.5L827.8 769.1M827.8 769.1L715.1 748.8M715.1 748.8L603.6 728.8M603.6 728.8L493.3 709.0M1279.5 881.3L1161.0 859.8M1161.0 859.8L1043.7 838.6M1043.7 838.6L927.8 817.6M927.8 817.6L813.1 796.9M813.1 796.9L699.7 776.3M699.7 776.3L587.6 756.0M587.6 756.0L476.6 736.0M1148.3 888.9L1030.3 867.4M1030.3 867.4L913.6 846.1M913.6 846.1L798.2 825.0M798.2 825.0L684.1 804.2M684.1 804.2L571.3 783.6M571.3 783.6L459.7 763.3M899.2 875.0L783.1 853.6M783.1 853.6L668.3 832.5M668.3 832.5L554.8 811.6M554.8 811.6L442.5 790.9M636.0 890.2L521.1 868.7M521.1 868.7L407.4 847.4" stroke="#d8d8d8" stroke-opacity="0.44" stroke-width="1.00" stroke-linecap="butt" fill="none"/>
<path d="M1618.1 864.4L1598.0 926.2M1598.0 926.2L1577.3 989.9M1577.3 989.9L1555.9 1055.6M1555.9 1055.6L1533.9 1123.3M1533.9 1123.3L1511.1 1193.1M1569.9 855.9L1549.1 917.4M1549.1 917.4L1527.7 980.8M1527.7 980.8L1505.6 1046.2M1505.6 1046.2L1482.9 1113.6M1482.9 1113.6L1459.4 1183.1M1500.5 908.6L1478.4 971.8M1478.4 971.8L1455.6 1036.8M1455.6 1036.8L1432.1 1103.9M1432.1 1103.9L1407.9 1173.1M1452.0 899.9L1429.3 962.7M1429.3 962.7L1405.8 1027.5M1405.8 1027.5L1381.6 1094.3M1381.6 1094.3L1356.6 1163.2M1355.8 882.5L1331.7 944.8M1331.7 944.8L1306.9 1009.0M1306.9 1009.0L1281.2 1075.2M1281.2 1075.2L1254.8 1143.5M1254.8 1143.5L1227.5 1214.0M1308.1 873.9L1283.3 936.0M1283.3 936.0L1257.7 999.9M1257.7 999.9L1231.4 1065.8M1231.4 1065.8L1204.3 1133.7M1204.3 1133.7L1176.3 1203.8M1260.5 865.3L1235.1 927.1M1235.1 927.1L1208.9 990.7M1208.9 990.7L1181.8 1056.3M1181.8 1056.3L1154.0 1124.0M1154.0 1124.0L1125.2 1193.8M1213.1 856.8L1187.1 918.3M1187.1 918.3L1160.2 981.6M1160.2 981.6L1132.5 1047.0M1132.5 1047.0L1103.9 1114.3M1103.9 1114.3L1074.5 1183.8M1091.7 900.8L1063.5 963.6M1063.5 963.6L1034.5 1028.3M1034.5 1028.3L1004.5 1095.1M1004.5 1095.1L973.6 1163.9M1044.4 892.1L1015.5 954.6M1015.5 954.6L985.8 1019.1M985.8 1019.1L955.2 1085.5M955.2 1085.5L923.6 1154.0M923.6 1154.0L891.0 1224.7M997.2 883.5L967.8 945.7M967.8 945.7L937.4 1009.9M937.4 1009.9L906.1 1076.0M906.1 1076.0L873.8 1144.2M873.8 1144.2L840.5 1214.6M950.3 874.8L920.2 936.8M920.2 936.8L889.2 1000.7M889.2 1000.7L857.2 1066.5M857.2 1066.5L824.2 1134.4M824.2 1134.4L790.2 1204.5M857.1 857.7L825.7 919.2M825.7 919.2L793.4 982.5M793.4 982.5L760.1 1047.7M760.1 1047.7L725.8 1115.0M725.8 1115.0L690.3 1184.4M778.8 910.4L745.9 973.4M745.9 973.4L711.9 1038.4M711.9 1038.4L676.9 1105.4M676.9 1105.4L640.8 1174.5M732.1 901.7L698.5 964.4M698.5 964.4L663.9 1029.1M663.9 1029.1L628.3 1095.8M628.3 1095.8L591.5 1164.6M685.6 893.0L651.4 955.5M651.4 955.5L616.2 1019.9M616.2 1019.9L579.9 1086.3M579.9 1086.3L542.4 1154.7M542.4 1154.7L503.7 1225.4M593.2 875.8L557.8 937.7M557.8 937.7L521.3 1001.5M521.3 1001.5L483.7 1067.3M483.7 1067.3L444.9 1135.1M444.9 1135.1L404.9 1205.1M547.4 867.2L511.3 928.9M511.3 928.9L474.2 992.4M474.2 992.4L436.0 1057.9M436.0 1057.9L396.5 1125.4M396.5 1125.4L355.8 1195.1M501.7 858.7L465.1 920.1M465.1 920.1L427.4 983.3M427.4 983.3L388.5 1048.5M388.5 1048.5L348.4 1115.7M348.4 1115.7L307.0 1185.1M419.0 911.3L380.7 974.3M380.7 974.3L341.2 1039.2M341.2 1039.2L300.5 1106.1M300.5 1106.1L258.4 1175.2M1652.7 917.2L1530.9 895.3M1643.3 947.1L1520.7 924.9M1520.7 924.9L1399.4 903.0M1399.4 903.0L1279.5 881.3M1633.8 977.5L1510.3 955.0M1510.3 955.0L1388.3 932.7M1388.3 932.7L1267.6 910.7M1267.6 910.7L1148.3 888.9M1624.1 1008.3L1499.8 985.5M1499.8 985.5L1377.0 962.9M1377.0 962.9L1255.5 940.5M1255.5 940.5L1135.4 918.4M1135.4 918.4L1016.7 896.6M1016.7 896.6L899.2 875.0M1604.4 1071.4L1478.4 1047.8M1478.4 1047.8L1353.9 1024.5M1353.9 1024.5L1230.8 1001.5M1230.8 1001.5L1109.1 978.7M1109.1 978.7L988.8 956.2M988.8 956.2L869.9 934.0M869.9 934.0L752.3 912.0M752.3 912.0L636.0 890.2M1594.3 1103.6L1467.4 1079.7M1467.4 1079.7L1342.1 1056.0M1342.1 1056.0L1218.1 1032.6M1218.1 1032.6L1095.6 1009.5M1095.6 1009.5L974.6 986.7M974.6 986.7L854.9 964.1M854.9 964.1L736.5 941.8M736.5 941.8L619.5 919.7M619.5 919.7L503.9 897.9M503.9 897.9L389.5 876.3M1584.1 1136.3L1456.3 1112.0M1456.3 1112.0L1330.1 1088.0M1330.1 1088.0L1205.3 1064.2M1205.3 1064.2L1082.0 1040.8M1082.0 1040.8L960.1 1017.6M960.1 1017.6L839.6 994.6M839.6 994.6L720.6 972.0M720.6 972.0L602.8 949.6M602.8 949.6L486.4 927.4M486.4 927.4L371.3 905.5M1573.7 1169.5L1445.0 1144.8M1445.0 1144.8L1317.9 1120.4M1317.9 1120.4L1192.3 1096.3M1192.3 1096.3L1068.2 1072.5M1068.2 1072.5L945.5 1048.9M945.5 1048.9L824.2 1025.6M824.2 1025.6L704.3 1002.6M704.3 1002.6L585.9 979.9M585.9 979.9L468.7 957.4M468.7 957.4L352.9 935.2M1293.1 1186.8L1165.7 1161.9M1165.7 1161.9L1039.9 1137.3M1039.9 1137.3L915.5 1113.0M915.5 1113.0L792.6 1089.0M792.6 1089.0L671.2 1065.3M671.2 1065.3L551.2 1041.9M551.2 1041.9L432.5 1018.7M432.5 1018.7L315.3 995.8M1152.1 1195.4L1025.4 1170.5M1025.4 1170.5L900.2 1145.8M900.2 1145.8L776.5 1121.4M776.5 1121.4L654.3 1097.4M654.3 1097.4L533.5 1073.6M533.5 1073.6L414.1 1050.0M414.1 1050.0L296.1 1026.8M884.7 1179.1L760.1 1154.3M760.1 1154.3L637.1 1129.9M637.1 1129.9L515.5 1105.7M515.5 1105.7L395.3 1081.8M395.3 1081.8L276.5 1058.2M743.5 1187.7L619.6 1162.9M619.6 1162.9L497.2 1138.3M497.2 1138.3L376.3 1114.1M376.3 1114.1L256.7 1090.1M337.3 1180.0L216.3 1155.3" stroke="#d8d8d8" stroke-opacity="0.44" stroke-width="1.25" stroke-linecap="butt" fill="none"/>
<path d="M1511.1 1193.1L1487.7 1265.2M1487.7 1265.2L1463.4 1339.7M1463.4 1339.7L1438.4 1416.7M1438.4 1416.7L1412.5 1496.3M1459.4 1183.1L1435.1 1254.9M1435.1 1254.9L1410.1 1329.0M1410.1 1329.0L1384.2 1405.6M1384.2 1405.6L1357.5 1484.8M1407.9 1173.1L1382.9 1244.6M1382.9 1244.6L1357.0 1318.4M1357.0 1318.4L1330.3 1394.6M1330.3 1394.6L1302.8 1473.4M1356.6 1163.2L1330.8 1234.3M1330.8 1234.3L1304.2 1307.7M1304.2 1307.7L1276.7 1383.6M1276.7 1383.6L1248.3 1462.0M1227.5 1214.0L1199.4 1286.7M1199.4 1286.7L1170.3 1361.8M1170.3 1361.8L1140.2 1439.5M1140.2 1439.5L1109.1 1519.8M1176.3 1203.8L1147.3 1276.2M1147.3 1276.2L1117.5 1351.0M1117.5 1351.0L1086.6 1428.3M1086.6 1428.3L1054.7 1508.2M1125.2 1193.8L1095.6 1265.8M1095.6 1265.8L1064.9 1340.3M1064.9 1340.3L1033.3 1417.2M1033.3 1417.2L1000.5 1496.7M1074.5 1183.8L1044.0 1255.5M1044.0 1255.5L1012.6 1329.5M1012.6 1329.5L980.2 1406.1M980.2 1406.1L946.6 1485.2M973.6 1163.9L941.8 1234.9M941.8 1234.9L908.8 1308.3M908.8 1308.3L874.8 1384.1M874.8 1384.1L839.7 1462.4M891.0 1224.7L857.3 1297.8M857.3 1297.8L822.5 1373.2M822.5 1373.2L786.6 1451.1M840.5 1214.6L806.1 1287.3M806.1 1287.3L770.5 1362.3M770.5 1362.3L733.8 1439.9M790.2 1204.5L755.1 1276.8M755.1 1276.8L718.8 1351.5M718.8 1351.5L681.3 1428.7M690.3 1184.4L653.8 1256.1M653.8 1256.1L616.0 1330.1M616.0 1330.1L577.0 1406.5M640.8 1174.5L603.5 1245.8M603.5 1245.8L565.0 1319.4M565.0 1319.4L525.3 1395.5M591.5 1164.6L553.5 1235.6M553.5 1235.6L514.3 1308.9M514.3 1308.9L473.8 1384.6M503.7 1225.4L463.8 1298.3M463.8 1298.3L422.6 1373.7M404.9 1205.1L363.6 1277.4M363.6 1277.4L320.9 1352.0M355.8 1195.1L313.8 1267.0M313.8 1267.0L270.5 1341.3M307.0 1185.1L264.3 1256.7M264.3 1256.7L220.3 1330.6M258.4 1175.2L215.1 1246.4M215.1 1246.4L170.3 1320.0M1552.4 1237.4L1422.0 1211.9M1422.0 1211.9L1293.1 1186.8M1541.6 1272.1L1410.2 1246.3M1410.2 1246.3L1280.3 1220.7M1280.3 1220.7L1152.1 1195.4M1530.5 1307.4L1398.2 1281.1M1398.2 1281.1L1267.4 1255.1M1267.4 1255.1L1138.3 1229.5M1138.3 1229.5L1010.7 1204.1M1010.7 1204.1L884.7 1179.1M1519.3 1343.3L1386.0 1316.5M1386.0 1316.5L1254.3 1290.1M1254.3 1290.1L1124.3 1264.1M1124.3 1264.1L995.8 1238.3M995.8 1238.3L868.9 1212.8M868.9 1212.8L743.5 1187.7M1496.3 1416.6L1361.1 1389.0M1361.1 1389.0L1227.5 1361.8M1227.5 1361.8L1095.6 1334.8M1095.6 1334.8L965.3 1308.2M965.3 1308.2L836.6 1281.9M836.6 1281.9L709.5 1256.0M709.5 1256.0L583.9 1230.4M583.9 1230.4L459.9 1205.0M459.9 1205.0L337.3 1180.0M1484.6 1454.2L1348.3 1426.1M1348.3 1426.1L1213.7 1398.4M1213.7 1398.4L1080.9 1371.0M1080.9 1371.0L949.6 1344.0M949.6 1344.0L820.1 1317.3M820.1 1317.3L692.1 1290.9M692.1 1290.9L565.7 1264.9M565.7 1264.9L440.8 1239.2M440.8 1239.2L317.4 1213.8M317.4 1213.8L195.6 1188.6M1472.6 1492.4L1335.3 1463.8M1335.3 1463.8L1199.8 1435.7M1199.8 1435.7L1065.9 1407.8M1065.9 1407.8L933.8 1380.4M933.8 1380.4L803.3 1353.2M803.3 1353.2L674.4 1326.4M674.4 1326.4L547.1 1300.0M547.1 1300.0L421.4 1273.8M421.4 1273.8L297.2 1248.0M297.2 1248.0L174.6 1222.5M1322.2 1502.2L1185.6 1473.5M1185.6 1473.5L1050.8 1445.2M1050.8 1445.2L917.7 1417.3M917.7 1417.3L786.2 1389.7M786.2 1389.7L656.5 1362.5M656.5 1362.5L528.3 1335.6M528.3 1335.6L401.7 1309.0M401.7 1309.0L276.7 1282.8M276.7 1282.8L153.2 1256.9" stroke="#d8d8d8" stroke-opacity="0.44" stroke-width="1.50" stroke-linecap="butt" fill="none"/>
<path d="M1412.5 1496.3L1385.7 1578.6M1357.5 1484.8L1329.8 1566.7M1302.8 1473.4L1274.2 1554.9M1248.3 1462.0L1218.9 1543.1M1460.5 1531.2L1322.2 1502.2" stroke="#d8d8d8" stroke-opacity="0.44" stroke-width="1.75" stroke-linecap="butt" fill="none"/>
<path d="M1192.0 788.8L1166.0 848.3M962.4 748.1L933.4 806.3M737.8 708.3L705.9 765.3M705.9 765.3L673.1 824.0M518.0 669.3L483.3 725.1M483.3 725.1L447.7 782.6M447.7 782.6L411.0 841.7M1302.9 823.7L1185.8 802.8M1185.8 802.8L1070.1 782.2M1070.1 782.2L955.6 761.8M955.6 761.8L842.3 741.7M842.3 741.7L730.3 721.7M730.3 721.7L619.5 702.0M619.5 702.0L509.8 682.5M1426.6 830.4L1308.6 809.5M1308.6 809.5L1192.0 788.8M1192.0 788.8L1076.6 768.4M1076.6 768.4L962.4 748.1M962.4 748.1L849.5 728.1M849.5 728.1L737.8 708.3M737.8 708.3L627.3 688.7M627.3 688.7L518.0 669.3" stroke="#ffffff" stroke-width="1.50" stroke-linecap="round" fill="none"/>
<path d="M1666.5 873.0L1647.1 935.1M1647.1 935.1L1627.0 999.0M1426.6 830.4L1403.8 891.2M1403.8 891.2L1380.4 953.8M1380.4 953.8L1356.2 1018.3M1166.0 848.3L1139.3 909.5M1139.3 909.5L1111.7 972.6M1111.7 972.6L1083.4 1037.6M933.4 806.3L903.6 866.3M903.6 866.3L872.8 928.0M872.8 928.0L841.2 991.6M673.1 824.0L639.3 884.4M639.3 884.4L604.5 946.6M604.5 946.6L568.6 1010.7M411.0 841.7L373.2 902.6M373.2 902.6L334.2 965.3M334.2 965.3L294.1 1029.9M1661.9 887.6L1540.9 866.1M1540.9 866.1L1421.2 844.8M1421.2 844.8L1302.9 823.7M1489.2 1016.4L1365.5 993.5M1365.5 993.5L1243.2 970.8M1243.2 970.8L1122.3 948.3M1122.3 948.3L1002.8 926.2M1002.8 926.2L884.7 904.3M884.7 904.3L767.8 882.6M767.8 882.6L652.3 861.1M652.3 861.1L538.1 839.9M538.1 839.9L425.1 819.0M568.6 1010.7L450.8 987.9M450.8 987.9L334.2 965.3M1666.5 873.0L1545.9 851.6M1545.9 851.6L1426.6 830.4" stroke="#ffffff" stroke-width="1.75" stroke-linecap="round" fill="none"/>
<path d="M1627.0 999.0L1606.4 1065.0M1606.4 1065.0L1585.1 1133.0M1585.1 1133.0L1563.2 1203.2M1356.2 1018.3L1331.3 1084.7M1331.3 1084.7L1305.6 1153.3M1083.4 1037.6L1054.1 1104.7M1054.1 1104.7L1023.9 1173.8M841.2 991.6L808.5 1057.1M808.5 1057.1L774.9 1124.7M774.9 1124.7L740.1 1194.4M568.6 1010.7L531.7 1076.8M531.7 1076.8L493.5 1144.9M493.5 1144.9L454.2 1215.2M294.1 1029.9L252.8 1096.5M252.8 1096.5L210.1 1165.3M1614.3 1039.6L1489.2 1016.4M1433.6 1178.1L1305.6 1153.3M1305.6 1153.3L1179.1 1128.8M1179.1 1128.8L1054.1 1104.7M1054.1 1104.7L930.6 1080.7M930.6 1080.7L808.5 1057.1M808.5 1057.1L687.9 1033.8M687.9 1033.8L568.6 1010.7M478.7 1171.4L357.0 1146.8M357.0 1146.8L236.7 1122.5" stroke="#ffffff" stroke-width="2.00" stroke-linecap="round" fill="none"/>
<path d="M1563.2 1203.2L1540.5 1275.7M1540.5 1275.7L1517.0 1350.5M1305.6 1153.3L1279.1 1224.1M1279.1 1224.1L1251.7 1297.2M1251.7 1297.2L1223.4 1372.7M1023.9 1173.8L992.8 1245.2M992.8 1245.2L960.6 1318.9M960.6 1318.9L927.4 1395.1M740.1 1194.4L704.3 1266.4M704.3 1266.4L667.3 1340.8M454.2 1215.2L413.6 1287.8M413.6 1287.8L371.6 1362.8M210.1 1165.3L166.1 1236.2M166.1 1236.2L120.6 1309.4M1563.2 1203.2L1433.6 1178.1M1373.6 1352.5L1241.0 1325.7M1241.0 1325.7L1110.0 1299.2M1110.0 1299.2L980.6 1273.0M980.6 1273.0L852.9 1247.1M852.9 1247.1L726.6 1221.6M726.6 1221.6L601.9 1196.4M601.9 1196.4L478.7 1171.4M509.2 1371.7L381.7 1344.7M381.7 1344.7L255.9 1318.1M255.9 1318.1L131.6 1291.8M371.6 1362.8L245.3 1335.9M245.3 1335.9L120.6 1309.4" stroke="#ffffff" stroke-width="2.25" stroke-linecap="round" fill="none"/>
<path d="M1517.0 1350.5L1492.8 1427.9M1492.8 1427.9L1467.8 1507.8M1223.4 1372.7L1194.1 1450.7M1194.1 1450.7L1163.9 1531.4M927.4 1395.1L893.0 1473.8M667.3 1340.8L629.0 1417.6M1507.9 1379.7L1373.6 1352.5M1308.8 1541.1L1171.2 1512.0M1171.2 1512.0L1035.4 1483.2M1035.4 1483.2L901.3 1454.8M901.3 1454.8L768.9 1426.8M768.9 1426.8L638.2 1399.1M638.2 1399.1L509.2 1371.7M1163.9 1531.4L1027.6 1502.4M1027.6 1502.4L893.0 1473.8M893.0 1473.8L760.2 1445.5M760.2 1445.5L629.0 1417.6M629.0 1417.6L499.5 1390.0M499.5 1390.0L371.6 1362.8" stroke="#ffffff" stroke-width="2.50" stroke-linecap="round" fill="none"/>
<path d="M1467.8 1507.8L1441.9 1590.6M1448.1 1570.6L1308.8 1541.1M1441.9 1590.6L1302.0 1560.8M1302.0 1560.8L1163.9 1531.4" stroke="#ffffff" stroke-width="2.75" stroke-linecap="round" fill="none"/>
<defs>
<linearGradient id="endL" gradientUnits="userSpaceOnUse" x1="178" y1="0" x2="330" y2="0"><stop offset="0" stop-color="#7a2c00" stop-opacity="0.22"/><stop offset="0.5" stop-color="#7a2c00" stop-opacity="0.05"/><stop offset="1" stop-color="#7a2c00" stop-opacity="0"/></linearGradient>
<linearGradient id="endR" gradientUnits="userSpaceOnUse" x1="1625" y1="0" x2="1480" y2="0"><stop offset="0" stop-color="#6a2400" stop-opacity="0.32"/><stop offset="0.45" stop-color="#6a2400" stop-opacity="0.10"/><stop offset="1" stop-color="#6a2400" stop-opacity="0"/></linearGradient>
<linearGradient id="endRo" gradientUnits="userSpaceOnUse" x1="1625" y1="0" x2="1560" y2="0"><stop offset="0" stop-color="#5a2000" stop-opacity="0.16"/><stop offset="1" stop-color="#6a2400" stop-opacity="0"/></linearGradient>
<pattern id="stripes" width="6" height="10" patternUnits="userSpaceOnUse" patternTransform="skewX(-4)"><rect width="6" height="10" fill="#00e200"/><rect x="0" width="2" height="10" fill="#00c000"/></pattern>
<pattern id="hatch" width="4" height="4" patternUnits="userSpaceOnUse" patternTransform="rotate(-32)"><rect width="4" height="4" fill="#00e400"/><rect width="4" height="1.2" fill="#00c400"/></pattern>
</defs>
<path d="M1669.2 864.3L1382.5 813.6" stroke="#4fbf8a" stroke-width="4" stroke-linecap="round" fill="none"/>
<path d="M1382.5 813.6L1195.6 780.5" stroke="#4fbf8a" stroke-width="5" stroke-linecap="round" fill="none"/>
<path d="M1666.5 872.0L1521.9 846.4" stroke="#e00000" stroke-width="4" fill="none"/>
<path d="M1610.9 886.5 L1607.1 882.6 L1602.8 878.8 L1598.1 875.3 L1593.1 871.9 L1587.8 868.8 L1582.1 865.8 L1576.2 863.1 L1570.0 860.7 L1563.6 858.5 L1557.0 856.6 L1550.2 855.0 L1543.4 853.7 L1536.4 852.6 L1529.4 851.9 L1522.3 851.4 L1515.3 851.3 L1508.3 851.5 L1501.4 852.0 L1494.5 852.7 L1487.9 853.9 L1481.4 855.2 L1475.1 856.9 L256.0 1195.0 L248.9 1197.3 L242.0 1199.8 L235.3 1202.7 L228.8 1205.9 L222.7 1209.3 L216.8 1213.0 L211.4 1217.0 L206.3 1221.2 L201.6 1225.6 L197.3 1230.1 L193.5 1234.8 L190.2 1239.7 L187.3 1244.7 L184.9 1249.8 L183.1 1255.0 L181.8 1260.1 L181.1 1265.4 L180.9 1270.6 L181.2 1275.7 L182.0 1280.9 L183.5 1285.9 L185.4 1290.8 L187.9 1295.6 L190.9 1300.2 L194.4 1304.6 L198.4 1308.8 L202.9 1312.8 L207.8 1316.6 L213.2 1320.0 L218.9 1323.2 L225.0 1326.0 L231.5 1328.6 L238.2 1330.8 L245.2 1332.6 L252.5 1334.1 L260.0 1335.2 L267.6 1336.0 L378.5 1341.4 L1573.7 996.2 L1615.3 946.4 L1618.2 942.5 L1620.6 938.3 L1622.6 934.1 L1624.0 929.8 L1624.9 925.5 L1625.3 921.0 L1625.3 916.6 L1624.6 912.1 L1623.6 907.7 L1622.0 903.3 L1619.9 898.9 L1617.4 894.7 L1614.4 890.5Z" stroke="#00806a" stroke-width="3" stroke-linejoin="round" fill="none"/>
<path d="M310.6 1318.3 L316.5 1330.6 L352.2 1338.4 L356.0 1331.8 L370.1 1332.8 L374.1 1326.6 L385.4 1328.0 L389.4 1319.5 L402.4 1320.8 L406.5 1314.9 L416.6 1314.0 L424.2 1299.0 L418.4 1287.5Z" fill="url(#hatch)"/>
<path d="M413.3 1289.0 L419.5 1301.1 L455.1 1308.8 L458.8 1302.3 L472.8 1303.3 L476.6 1297.1 L487.9 1298.6 L491.6 1290.1 L504.6 1291.4 L508.6 1285.6 L518.6 1284.7 L525.8 1269.9 L519.8 1258.5Z" fill="url(#hatch)"/>
<path d="M514.7 1260.0 L521.1 1272.0 L556.7 1279.5 L560.2 1273.1 L574.2 1274.1 L577.9 1268.1 L589.1 1269.5 L592.7 1261.1 L605.6 1262.4 L609.4 1256.7 L619.3 1255.8 L626.2 1241.1 L619.9 1229.9Z" fill="url(#hatch)"/>
<path d="M614.9 1231.4 L621.6 1243.2 L657.1 1250.7 L660.5 1244.3 L674.4 1245.3 L677.9 1239.3 L689.1 1240.7 L692.5 1232.5 L705.4 1233.7 L709.0 1228.1 L718.9 1227.2 L725.4 1212.7 L718.9 1201.7Z" fill="url(#hatch)"/>
<path d="M713.9 1203.1 L720.8 1214.8 L756.3 1222.1 L759.5 1215.9 L773.4 1216.9 L776.7 1210.9 L787.9 1212.3 L791.1 1204.2 L803.9 1205.4 L807.4 1199.8 L817.2 1198.9 L823.3 1184.7 L816.6 1173.7Z" fill="url(#hatch)"/>
<path d="M811.8 1175.1 L818.9 1186.7 L854.3 1194.0 L857.4 1187.8 L871.2 1188.7 L874.4 1182.9 L885.5 1184.2 L888.5 1176.2 L901.3 1177.4 L904.6 1171.9 L914.3 1171.0 L920.1 1156.9 L913.2 1146.2Z" fill="url(#hatch)"/>
<path d="M908.4 1147.5 L915.7 1158.9 L951.2 1166.1 L954.0 1160.0 L967.8 1161.0 L970.8 1155.2 L982.0 1156.5 L984.7 1148.6 L997.5 1149.8 L1000.7 1144.4 L1010.3 1143.5 L1015.8 1129.5 L1008.7 1118.9Z" fill="url(#hatch)"/>
<path d="M1004.0 1120.2 L1011.5 1131.5 L1046.8 1138.6 L1049.6 1132.6 L1063.3 1133.5 L1066.2 1127.8 L1077.3 1129.1 L1079.8 1121.3 L1092.5 1122.5 L1095.6 1117.1 L1105.2 1116.2 L1110.3 1102.4 L1103.0 1091.9Z" fill="url(#hatch)"/>
<path d="M1098.3 1093.3 L1106.1 1104.4 L1141.4 1111.4 L1144.0 1105.5 L1157.6 1106.4 L1160.4 1100.7 L1171.4 1102.0 L1173.8 1094.3 L1186.5 1095.5 L1189.4 1090.2 L1198.9 1089.3 L1203.7 1075.7 L1196.3 1065.3Z" fill="url(#hatch)"/>
<path d="M1191.6 1066.6 L1199.5 1077.6 L1234.8 1084.6 L1237.3 1078.7 L1250.8 1079.6 L1253.5 1074.0 L1264.5 1075.3 L1266.7 1067.6 L1279.3 1068.8 L1282.2 1063.5 L1291.6 1062.7 L1296.1 1049.2 L1288.4 1039.0Z" fill="url(#hatch)"/>
<path d="M1283.8 1040.3 L1291.9 1051.2 L1327.2 1058.0 L1329.5 1052.2 L1343.0 1053.1 L1345.5 1047.6 L1356.5 1048.8 L1358.5 1041.3 L1371.1 1042.4 L1373.8 1037.2 L1383.1 1036.4 L1387.3 1023.1 L1379.5 1013.0Z" fill="url(#hatch)"/>
<path d="M1375.0 1014.3 L1383.3 1025.0 L1418.4 1031.8 L1420.6 1026.0 L1434.1 1026.9 L1436.5 1021.4 L1447.4 1022.7 L1449.3 1015.2 L1461.8 1016.4 L1464.4 1011.2 L1473.7 1010.4 L1477.5 997.3 L1469.5 987.2Z" fill="url(#hatch)"/>
<path d="M1465.1 988.5 L1473.5 999.1 L1508.7 1005.8 L1510.7 1000.1 L1524.1 1001.0 L1526.4 995.6 L1537.3 996.9 L1539.0 989.5 L1551.5 990.6 L1553.9 985.5 L1563.1 984.7 L1566.7 971.7 L1558.5 961.8Z" fill="url(#hatch)"/>
<path d="M178.6 1143.8 L178.8 1139.6 L179.6 1135.4 L180.7 1131.3 L182.2 1127.1 L184.2 1123.0 L186.5 1119.0 L189.2 1115.1 L192.3 1111.3 L195.8 1107.6 L199.6 1104.0 L203.7 1100.6 L208.1 1097.3 L212.8 1094.3 L217.8 1091.4 L223.0 1088.7 L228.5 1086.3 L234.1 1084.0 L239.9 1082.1 L245.8 1080.3 L1491.7 743.5 L1497.0 742.2 L1502.3 741.1 L1507.9 740.3 L1513.5 739.7 L1519.2 739.3 L1525.0 739.1 L1530.8 739.2 L1536.6 739.5 L1542.4 740.0 L1548.2 740.8 L1553.9 741.8 L1559.5 743.0 L1565.0 744.5 L1570.4 746.1 L1575.6 748.0 L1580.6 750.0 L1585.4 752.2 L1590.0 754.6 L1594.4 757.2 L1598.4 759.9 L1602.2 762.8 L1605.7 765.8 L1608.9 768.9 L1611.7 772.2 L1614.2 775.5 L1616.3 778.9 L1618.1 782.4 L1619.5 785.9 L1620.5 789.4 L1621.1 793.0 L1621.4 796.6 L1621.2 800.1 L1610.3 922.0 L1609.7 925.6 L1608.8 929.1 L1607.4 932.5 L1605.7 935.9 L1603.6 939.1 L1601.2 942.3 L1598.4 945.3 L1595.2 948.2 L1591.8 951.0 L1588.0 953.5 L1583.9 955.9 L1579.6 958.1 L1575.0 960.2 L1570.2 962.0 L1565.1 963.5 L318.7 1319.8 L312.6 1321.4 L306.5 1322.8 L300.2 1323.8 L293.9 1324.5 L287.6 1325.0 L281.3 1325.2 L275.0 1325.1 L268.8 1324.7 L262.7 1324.0 L256.7 1323.0 L250.9 1321.8 L245.3 1320.2 L239.9 1318.5 L234.7 1316.4 L229.7 1314.1 L225.1 1311.6 L220.7 1308.8 L216.7 1305.9 L213.0 1302.7 L209.6 1299.3 L206.6 1295.8 L204.0 1292.2 L201.8 1288.4 L200.0 1284.5 L198.6 1280.5 L197.6 1276.4 L179.3 1152.1 L178.7 1148.0Z" fill="#d2682d"/>
<path d="M178.6 1143.8 L178.8 1139.6 L179.6 1135.4 L180.7 1131.3 L182.2 1127.1 L184.2 1123.0 L186.5 1119.0 L189.2 1115.1 L192.3 1111.3 L195.8 1107.6 L199.6 1104.0 L203.7 1100.6 L208.1 1097.3 L212.8 1094.3 L217.8 1091.4 L223.0 1088.7 L228.5 1086.3 L234.1 1084.0 L239.9 1082.1 L245.8 1080.3 L1491.7 743.5 L1497.0 742.2 L1502.3 741.1 L1507.9 740.3 L1513.5 739.7 L1519.2 739.3 L1525.0 739.1 L1530.8 739.2 L1536.6 739.5 L1542.4 740.0 L1548.2 740.8 L1553.9 741.8 L1559.5 743.0 L1565.0 744.5 L1570.4 746.1 L1575.6 748.0 L1580.6 750.0 L1585.4 752.2 L1590.0 754.6 L1594.4 757.2 L1598.4 759.9 L1602.2 762.8 L1605.7 765.8 L1608.9 768.9 L1611.7 772.2 L1614.2 775.5 L1616.3 778.9 L1618.1 782.4 L1619.5 785.9 L1620.5 789.4 L1621.1 793.0 L1621.4 796.6 L1621.2 800.1 L1610.3 922.0 L1609.7 925.6 L1608.8 929.1 L1607.4 932.5 L1605.7 935.9 L1603.6 939.1 L1601.2 942.3 L1598.4 945.3 L1595.2 948.2 L1591.8 951.0 L1588.0 953.5 L1583.9 955.9 L1579.6 958.1 L1575.0 960.2 L1570.2 962.0 L1565.1 963.5 L318.7 1319.8 L312.6 1321.4 L306.5 1322.8 L300.2 1323.8 L293.9 1324.5 L287.6 1325.0 L281.3 1325.2 L275.0 1325.1 L268.8 1324.7 L262.7 1324.0 L256.7 1323.0 L250.9 1321.8 L245.3 1320.2 L239.9 1318.5 L234.7 1316.4 L229.7 1314.1 L225.1 1311.6 L220.7 1308.8 L216.7 1305.9 L213.0 1302.7 L209.6 1299.3 L206.6 1295.8 L204.0 1292.2 L201.8 1288.4 L200.0 1284.5 L198.6 1280.5 L197.6 1276.4 L179.3 1152.1 L178.7 1148.0Z" fill="url(#endL)"/>
<path d="M178.6 1143.8 L178.8 1139.6 L179.6 1135.4 L180.7 1131.3 L182.2 1127.1 L184.2 1123.0 L186.5 1119.0 L189.2 1115.1 L192.3 1111.3 L195.8 1107.6 L199.6 1104.0 L203.7 1100.6 L208.1 1097.3 L212.8 1094.3 L217.8 1091.4 L223.0 1088.7 L228.5 1086.3 L234.1 1084.0 L239.9 1082.1 L245.8 1080.3 L1491.7 743.5 L1497.0 742.2 L1502.3 741.1 L1507.9 740.3 L1513.5 739.7 L1519.2 739.3 L1525.0 739.1 L1530.8 739.2 L1536.6 739.5 L1542.4 740.0 L1548.2 740.8 L1553.9 741.8 L1559.5 743.0 L1565.0 744.5 L1570.4 746.1 L1575.6 748.0 L1580.6 750.0 L1585.4 752.2 L1590.0 754.6 L1594.4 757.2 L1598.4 759.9 L1602.2 762.8 L1605.7 765.8 L1608.9 768.9 L1611.7 772.2 L1614.2 775.5 L1616.3 778.9 L1618.1 782.4 L1619.5 785.9 L1620.5 789.4 L1621.1 793.0 L1621.4 796.6 L1621.2 800.1 L1610.3 922.0 L1609.7 925.6 L1608.8 929.1 L1607.4 932.5 L1605.7 935.9 L1603.6 939.1 L1601.2 942.3 L1598.4 945.3 L1595.2 948.2 L1591.8 951.0 L1588.0 953.5 L1583.9 955.9 L1579.6 958.1 L1575.0 960.2 L1570.2 962.0 L1565.1 963.5 L318.7 1319.8 L312.6 1321.4 L306.5 1322.8 L300.2 1323.8 L293.9 1324.5 L287.6 1325.0 L281.3 1325.2 L275.0 1325.1 L268.8 1324.7 L262.7 1324.0 L256.7 1323.0 L250.9 1321.8 L245.3 1320.2 L239.9 1318.5 L234.7 1316.4 L229.7 1314.1 L225.1 1311.6 L220.7 1308.8 L216.7 1305.9 L213.0 1302.7 L209.6 1299.3 L206.6 1295.8 L204.0 1292.2 L201.8 1288.4 L200.0 1284.5 L198.6 1280.5 L197.6 1276.4 L179.3 1152.1 L178.7 1148.0Z" fill="url(#endRo)"/>
<path d="M249.2 1087.1 L244.0 1088.6 L238.9 1090.4 L233.9 1092.3 L229.1 1094.5 L224.5 1096.9 L220.2 1099.4 L216.0 1102.1 L212.1 1105.0 L208.5 1108.0 L205.2 1111.1 L202.1 1114.4 L199.4 1117.7 L197.0 1121.2 L195.0 1124.7 L193.3 1128.3 L191.9 1132.0 L190.9 1135.6 L190.3 1139.3 L190.1 1143.0 L190.2 1146.6 L190.7 1150.2 L191.6 1153.8 L192.8 1157.3 L194.5 1160.7 L196.4 1164.0 L198.8 1167.2 L201.4 1170.3 L204.4 1173.2 L207.8 1175.9 L211.4 1178.5 L215.3 1180.9 L219.5 1183.1 L223.9 1185.1 L228.5 1186.9 L233.4 1188.5 L238.5 1189.8 L243.7 1190.9 L249.0 1191.7 L254.5 1192.3 L260.0 1192.7 L265.7 1192.8 L271.3 1192.6 L277.0 1192.2 L282.6 1191.5 L288.3 1190.6 L293.8 1189.5 L299.3 1188.1 L1570.1 835.2 L1574.6 833.9 L1578.9 832.3 L1583.0 830.5 L1586.9 828.6 L1590.6 826.5 L1594.0 824.3 L1597.1 821.9 L1599.9 819.4 L1602.4 816.8 L1604.6 814.0 L1606.4 811.2 L1608.0 808.2 L1609.2 805.3 L1610.0 802.2 L1610.5 799.1 L1610.7 796.0 L1610.5 792.9 L1610.0 789.7 L1609.1 786.6 L1607.9 783.5 L1606.3 780.5 L1604.4 777.5 L1602.3 774.5 L1599.8 771.7 L1597.0 768.9 L1593.9 766.3 L1590.6 763.7 L1587.0 761.3 L1583.2 759.1 L1579.2 757.0 L1574.9 755.0 L1570.5 753.2 L1565.9 751.6 L1561.2 750.1 L1556.4 748.9 L1551.4 747.8 L1546.4 746.9 L1541.3 746.2 L1536.2 745.7 L1531.1 745.5 L1526.0 745.4 L1520.9 745.5 L1515.8 745.9 L1510.9 746.4 L1506.0 747.2 L1501.3 748.1 L1496.6 749.2Z" fill="#d2692e"/>
<path d="M249.2 1087.1 L244.0 1088.6 L238.9 1090.4 L233.9 1092.3 L229.1 1094.5 L224.5 1096.9 L220.2 1099.4 L216.0 1102.1 L212.1 1105.0 L208.5 1108.0 L205.2 1111.1 L202.1 1114.4 L199.4 1117.7 L197.0 1121.2 L195.0 1124.7 L193.3 1128.3 L191.9 1132.0 L190.9 1135.6 L190.3 1139.3 L190.1 1143.0 L190.2 1146.6 L190.7 1150.2 L191.6 1153.8 L192.8 1157.3 L194.5 1160.7 L196.4 1164.0 L198.8 1167.2 L201.4 1170.3 L204.4 1173.2 L207.8 1175.9 L211.4 1178.5 L215.3 1180.9 L219.5 1183.1 L223.9 1185.1 L228.5 1186.9 L233.4 1188.5 L238.5 1189.8 L243.7 1190.9 L249.0 1191.7 L254.5 1192.3 L260.0 1192.7 L265.7 1192.8 L271.3 1192.6 L277.0 1192.2 L282.6 1191.5 L288.3 1190.6 L293.8 1189.5 L299.3 1188.1 L1570.1 835.2 L1574.6 833.9 L1578.9 832.3 L1583.0 830.5 L1586.9 828.6 L1590.6 826.5 L1594.0 824.3 L1597.1 821.9 L1599.9 819.4 L1602.4 816.8 L1604.6 814.0 L1606.4 811.2 L1608.0 808.2 L1609.2 805.3 L1610.0 802.2 L1610.5 799.1 L1610.7 796.0 L1610.5 792.9 L1610.0 789.7 L1609.1 786.6 L1607.9 783.5 L1606.3 780.5 L1604.4 777.5 L1602.3 774.5 L1599.8 771.7 L1597.0 768.9 L1593.9 766.3 L1590.6 763.7 L1587.0 761.3 L1583.2 759.1 L1579.2 757.0 L1574.9 755.0 L1570.5 753.2 L1565.9 751.6 L1561.2 750.1 L1556.4 748.9 L1551.4 747.8 L1546.4 746.9 L1541.3 746.2 L1536.2 745.7 L1531.1 745.5 L1526.0 745.4 L1520.9 745.5 L1515.8 745.9 L1510.9 746.4 L1506.0 747.2 L1501.3 748.1 L1496.6 749.2Z" fill="url(#endR)"/>
<path d="M249.2 1087.1 L244.0 1088.6 L238.9 1090.4 L233.9 1092.3 L229.1 1094.5 L224.5 1096.9 L220.2 1099.4 L216.0 1102.1 L212.1 1105.0 L208.5 1108.0 L205.2 1111.1 L202.1 1114.4 L199.4 1117.7 L197.0 1121.2 L195.0 1124.7 L193.3 1128.3 L191.9 1132.0 L190.9 1135.6 L190.3 1139.3 L190.1 1143.0 L190.2 1146.6 L190.7 1150.2 L191.6 1153.8 L192.8 1157.3 L194.5 1160.7 L196.4 1164.0 L198.8 1167.2 L201.4 1170.3 L204.4 1173.2 L207.8 1175.9 L211.4 1178.5 L215.3 1180.9 L219.5 1183.1 L223.9 1185.1 L228.5 1186.9 L233.4 1188.5 L238.5 1189.8 L243.7 1190.9 L249.0 1191.7 L254.5 1192.3 L260.0 1192.7 L265.7 1192.8 L271.3 1192.6 L277.0 1192.2 L282.6 1191.5 L288.3 1190.6 L293.8 1189.5 L299.3 1188.1 L1570.1 835.2 L1574.6 833.9 L1578.9 832.3 L1583.0 830.5 L1586.9 828.6 L1590.6 826.5 L1594.0 824.3 L1597.1 821.9 L1599.9 819.4 L1602.4 816.8 L1604.6 814.0 L1606.4 811.2 L1608.0 808.2 L1609.2 805.3 L1610.0 802.2 L1610.5 799.1 L1610.7 796.0 L1610.5 792.9 L1610.0 789.7 L1609.1 786.6 L1607.9 783.5 L1606.3 780.5 L1604.4 777.5 L1602.3 774.5 L1599.8 771.7 L1597.0 768.9 L1593.9 766.3 L1590.6 763.7 L1587.0 761.3 L1583.2 759.1 L1579.2 757.0 L1574.9 755.0 L1570.5 753.2 L1565.9 751.6 L1561.2 750.1 L1556.4 748.9 L1551.4 747.8 L1546.4 746.9 L1541.3 746.2 L1536.2 745.7 L1531.1 745.5 L1526.0 745.4 L1520.9 745.5 L1515.8 745.9 L1510.9 746.4 L1506.0 747.2 L1501.3 748.1 L1496.6 749.2Z" fill="url(#endL)"/>
<path d="M1501.6 874.1 L1510.7 866.9 L1527.5 860.7 L1543.7 858.2 L1557.0 859.9 L1568.5 860.4 L1567.5 877.9 L1556.9 963.0 L1556.2 973.0 L1487.7 988.4 L1488.4 965.4 L1488.3 935.1 L1491.7 897.6 L1496.0 885.2Z" fill="url(#stripes)"/>
<path d="M1501.6 874.1 L1502.6 877.3 L1504.9 895.8 L1502.3 931.5 L1500.9 962.5 L1499.4 983.9 L1487.7 988.4 L1488.4 965.4 L1488.3 935.1 L1491.7 897.6 L1496.0 885.2Z" fill="#00a800" fill-opacity="0.45"/>
<path d="M1501.6 874.1 L1510.7 866.9 L1527.5 860.7 L1543.7 858.2 L1557.0 859.9 L1551.5 867.9 L1536.5 869.2 L1521.2 878.6 L1502.6 877.3Z" fill="#007600"/>
<path d="M1409.9 899.7 L1419.1 892.5 L1436.1 886.1 L1452.5 883.6 L1466.0 885.3 L1477.7 885.7 L1477.0 903.3 L1467.5 988.5 L1466.9 998.6 L1397.5 1014.2 L1397.9 991.2 L1397.4 960.8 L1400.2 923.2 L1404.4 910.8Z" fill="url(#stripes)"/>
<path d="M1409.9 899.7 L1411.0 902.9 L1413.6 921.4 L1411.5 957.1 L1410.6 988.2 L1409.4 1009.6 L1397.5 1014.2 L1397.9 991.2 L1397.4 960.8 L1400.2 923.2 L1404.4 910.8Z" fill="#00a800" fill-opacity="0.45"/>
<path d="M1409.9 899.7 L1419.1 892.5 L1436.1 886.1 L1452.5 883.6 L1466.0 885.3 L1460.5 893.3 L1445.3 894.7 L1430.0 904.2 L1411.0 902.9Z" fill="#007600"/>
<path d="M1317.2 925.6 L1326.3 918.3 L1343.5 911.9 L1360.1 909.3 L1374.0 911.0 L1385.8 911.4 L1385.4 929.0 L1377.0 1014.4 L1376.6 1024.4 L1306.4 1040.2 L1306.4 1017.2 L1305.4 986.9 L1307.7 949.2 L1311.7 936.7Z" fill="url(#stripes)"/>
<path d="M1317.2 925.6 L1318.3 928.7 L1321.2 947.3 L1319.7 983.1 L1319.3 1014.2 L1318.3 1035.7 L1306.4 1040.2 L1306.4 1017.2 L1305.4 986.9 L1307.7 949.2 L1311.7 936.7Z" fill="#00a800" fill-opacity="0.45"/>
<path d="M1317.2 925.6 L1326.3 918.3 L1343.5 911.9 L1360.1 909.3 L1374.0 911.0 L1368.4 919.0 L1353.1 920.4 L1337.6 930.0 L1318.3 928.7Z" fill="#007600"/>
<path d="M1223.3 951.7 L1232.5 944.5 L1249.8 938.0 L1266.7 935.4 L1280.8 937.0 L1292.8 937.4 L1292.6 955.0 L1285.5 1040.5 L1285.3 1050.6 L1214.1 1066.6 L1213.8 1043.6 L1212.3 1013.2 L1214.0 975.4 L1217.9 962.9Z" fill="url(#stripes)"/>
<path d="M1223.3 951.7 L1224.5 954.9 L1227.7 973.5 L1226.7 1009.3 L1226.8 1040.6 L1226.2 1062.0 L1214.1 1066.6 L1213.8 1043.6 L1212.3 1013.2 L1214.0 975.4 L1217.9 962.9Z" fill="#00a800" fill-opacity="0.45"/>
<path d="M1223.3 951.7 L1232.5 944.5 L1249.8 938.0 L1266.7 935.4 L1280.8 937.0 L1275.3 945.0 L1259.7 946.5 L1244.1 956.1 L1224.5 954.9Z" fill="#007600"/>
<path d="M1128.3 978.2 L1137.5 970.9 L1155.1 964.4 L1172.2 961.7 L1186.5 963.3 L1198.7 963.6 L1198.8 981.3 L1192.9 1067.0 L1192.8 1077.1 L1120.8 1093.3 L1120.1 1070.2 L1118.0 1039.8 L1119.2 1002.0 L1123.0 989.4Z" fill="url(#stripes)"/>
<path d="M1128.3 978.2 L1129.5 981.4 L1133.2 1000.1 L1132.7 1035.9 L1133.3 1067.2 L1133.0 1088.7 L1120.8 1093.3 L1120.1 1070.2 L1118.0 1039.8 L1119.2 1002.0 L1123.0 989.4Z" fill="#00a800" fill-opacity="0.45"/>
<path d="M1128.3 978.2 L1137.5 970.9 L1155.1 964.4 L1172.2 961.7 L1186.5 963.3 L1181.0 971.4 L1165.2 972.9 L1149.5 982.6 L1129.5 981.4Z" fill="#007600"/>
<path d="M1032.1 1005.1 L1041.4 997.7 L1059.1 991.1 L1076.5 988.4 L1091.1 990.0 L1103.5 990.2 L1103.9 1007.9 L1099.2 1093.7 L1099.3 1103.8 L1026.3 1120.3 L1025.3 1097.2 L1022.7 1066.7 L1023.3 1028.9 L1027.0 1016.3Z" fill="url(#stripes)"/>
<path d="M1032.1 1005.1 L1033.5 1008.3 L1037.4 1026.9 L1037.6 1062.8 L1038.6 1094.1 L1038.7 1115.6 L1026.3 1120.3 L1025.3 1097.2 L1022.7 1066.7 L1023.3 1028.9 L1027.0 1016.3Z" fill="#00a800" fill-opacity="0.45"/>
<path d="M1032.1 1005.1 L1041.4 997.7 L1059.1 991.1 L1076.5 988.4 L1091.1 990.0 L1085.7 998.0 L1069.6 999.6 L1053.8 1009.3 L1033.5 1008.3Z" fill="#007600"/>
<path d="M934.8 1032.2 L944.1 1024.8 L962.0 1018.2 L979.6 1015.4 L994.5 1016.9 L1007.1 1017.2 L1007.8 1034.8 L1004.5 1120.8 L1004.7 1130.9 L930.8 1147.7 L929.3 1124.5 L926.2 1094.0 L926.2 1056.1 L929.7 1043.5Z" fill="url(#stripes)"/>
<path d="M934.8 1032.2 L936.2 1035.4 L940.6 1054.1 L941.2 1090.0 L942.8 1121.4 L943.2 1142.9 L930.8 1147.7 L929.3 1124.5 L926.2 1094.0 L926.2 1056.1 L929.7 1043.5Z" fill="#00a800" fill-opacity="0.45"/>
<path d="M934.8 1032.2 L944.1 1024.8 L962.0 1018.2 L979.6 1015.4 L994.5 1016.9 L989.1 1025.0 L972.8 1026.6 L956.9 1036.4 L936.2 1035.4Z" fill="#007600"/>
<path d="M836.3 1059.7 L845.6 1052.3 L863.8 1045.6 L881.6 1042.7 L896.7 1044.2 L909.6 1044.4 L910.6 1062.1 L908.5 1148.2 L908.9 1158.4 L834.1 1175.3 L832.2 1152.2 L828.6 1121.6 L827.9 1083.6 L831.3 1071.0Z" fill="url(#stripes)"/>
<path d="M836.3 1059.7 L837.8 1062.9 L842.5 1081.6 L843.8 1117.6 L845.9 1149.0 L846.7 1170.5 L834.1 1175.3 L832.2 1152.2 L828.6 1121.6 L827.9 1083.6 L831.3 1071.0Z" fill="#00a800" fill-opacity="0.45"/>
<path d="M836.3 1059.7 L845.6 1052.3 L863.8 1045.6 L881.6 1042.7 L896.7 1044.2 L891.4 1052.3 L874.8 1054.0 L858.8 1063.8 L837.8 1062.9Z" fill="#007600"/>
<path d="M736.6 1087.5 L746.0 1080.0 L764.3 1073.3 L782.4 1070.3 L797.8 1071.8 L810.8 1072.0 L812.1 1089.7 L811.5 1175.9 L812.0 1186.1 L736.2 1203.3 L733.9 1180.1 L729.7 1149.6 L728.5 1111.5 L731.7 1098.8Z" fill="url(#stripes)"/>
<path d="M736.6 1087.5 L738.1 1090.7 L743.2 1109.4 L745.1 1145.5 L747.8 1176.9 L748.9 1198.5 L736.2 1203.3 L733.9 1180.1 L729.7 1149.6 L728.5 1111.5 L731.7 1098.8Z" fill="#00a800" fill-opacity="0.45"/>
<path d="M736.6 1087.5 L746.0 1080.0 L764.3 1073.3 L782.4 1070.3 L797.8 1071.8 L792.5 1080.0 L775.6 1081.7 L759.5 1091.6 L738.1 1090.7Z" fill="#007600"/>
<path d="M635.6 1115.7 L645.0 1108.2 L663.5 1101.3 L681.9 1098.3 L697.6 1099.8 L710.9 1099.9 L712.5 1117.7 L713.2 1204.0 L713.9 1214.2 L637.1 1231.7 L634.4 1208.4 L629.6 1177.8 L627.8 1139.7 L630.8 1127.0Z" fill="url(#stripes)"/>
<path d="M635.6 1115.7 L637.2 1118.9 L642.7 1137.6 L645.2 1173.7 L648.5 1205.2 L650.0 1226.8 L637.1 1231.7 L634.4 1208.4 L629.6 1177.8 L627.8 1139.7 L630.8 1127.0Z" fill="#00a800" fill-opacity="0.45"/>
<path d="M635.6 1115.7 L645.0 1108.2 L663.5 1101.3 L681.9 1098.3 L697.6 1099.8 L692.3 1108.0 L675.3 1109.7 L659.0 1119.7 L637.2 1118.9Z" fill="#007600"/>
<path d="M533.4 1144.2 L542.9 1136.6 L561.6 1129.7 L580.2 1126.7 L596.2 1128.1 L609.7 1128.1 L611.6 1145.9 L613.7 1232.4 L614.7 1242.6 L536.8 1260.4 L533.7 1237.1 L528.3 1206.5 L525.8 1168.3 L528.7 1155.6Z" fill="url(#stripes)"/>
<path d="M533.4 1144.2 L535.1 1147.4 L541.0 1166.1 L544.1 1202.3 L547.9 1233.8 L549.8 1255.4 L536.8 1260.4 L533.7 1237.1 L528.3 1206.5 L525.8 1168.3 L528.7 1155.6Z" fill="#00a800" fill-opacity="0.45"/>
<path d="M533.4 1144.2 L542.9 1136.6 L561.6 1129.7 L580.2 1126.7 L596.2 1128.1 L591.0 1136.3 L573.6 1138.1 L557.3 1148.1 L535.1 1147.4Z" fill="#007600"/>
<path d="M429.9 1173.1 L439.4 1165.5 L458.3 1158.5 L477.2 1155.4 L493.5 1156.7 L507.2 1156.8 L509.5 1174.6 L513.1 1261.2 L514.2 1271.4 L435.3 1289.4 L431.7 1266.1 L425.8 1235.5 L422.6 1197.2 L425.3 1184.5Z" fill="url(#stripes)"/>
<path d="M429.9 1173.1 L431.7 1176.3 L438.0 1195.0 L441.8 1231.2 L446.2 1262.7 L448.4 1284.4 L435.3 1289.4 L431.7 1266.1 L425.8 1235.5 L422.6 1197.2 L425.3 1184.5Z" fill="#00a800" fill-opacity="0.45"/>
<path d="M429.9 1173.1 L439.4 1165.5 L458.3 1158.5 L477.2 1155.4 L493.5 1156.7 L488.3 1165.0 L470.7 1166.8 L454.3 1177.0 L431.7 1176.3Z" fill="#007600"/>
<path d="M325.1 1202.3 L334.6 1194.6 L353.8 1187.6 L372.9 1184.4 L389.5 1185.7 L403.5 1185.7 L406.1 1203.6 L411.2 1290.3 L412.5 1300.5 L332.5 1318.8 L328.5 1295.5 L321.9 1264.8 L318.0 1226.5 L320.6 1213.8Z" fill="url(#stripes)"/>
<path d="M325.1 1202.3 L327.0 1205.5 L333.7 1224.2 L338.2 1260.5 L343.1 1292.1 L345.8 1313.8 L332.5 1318.8 L328.5 1295.5 L321.9 1264.8 L318.0 1226.5 L320.6 1213.8Z" fill="#00a800" fill-opacity="0.45"/>
<path d="M325.1 1202.3 L334.6 1194.6 L353.8 1187.6 L372.9 1184.4 L389.5 1185.7 L384.4 1194.0 L366.5 1195.9 L349.9 1206.1 L327.0 1205.5Z" fill="#007600"/>
<path d="M245.8 1080.3 L239.9 1082.1 L234.1 1084.1 L228.5 1086.3 L223.0 1088.7 L217.8 1091.4 L212.9 1094.3 L208.1 1097.4 L203.7 1100.6 L199.6 1104.0 L195.8 1107.6 L192.3 1111.3 L189.2 1115.1 L186.5 1119.0 L184.2 1123.0 L182.2 1127.1 L180.7 1131.3 L179.5 1135.4 L178.8 1139.6 L178.6 1143.8 L178.7 1148.0 L179.3 1152.1 L180.2 1156.1 L181.7 1160.1 L183.5 1164.0 L185.7 1167.8 L188.4 1171.4 L191.4 1174.9 L194.8 1178.2 L198.6 1181.3 L202.7 1184.3 L207.1 1187.0 L211.9 1189.5 L216.9 1191.8 L222.2 1193.8 L227.8 1195.6 L233.5 1197.1 L239.5 1198.4 L245.6 1199.3 L251.8 1200.0 L258.1 1200.4 L264.5 1200.5 L271.0 1200.3 L277.4 1199.9 L283.9 1199.1 L290.3 1198.1 L296.6 1196.8 L302.8 1195.2 L1575.2 841.3 L1580.4 839.7 L1585.3 837.9 L1590.0 835.9 L1594.4 833.7 L1598.6 831.4 L1602.4 828.8 L1605.9 826.1 L1609.1 823.2 L1612.0 820.2 L1614.5 817.1 L1616.6 813.9 L1618.3 810.5 L1619.7 807.1 L1620.6 803.6 L1621.2 800.1 L1621.4 796.6 L1621.1 793.0 L1620.5 789.4 L1619.5 785.9 L1618.1 782.4 L1616.4 778.9 L1614.2 775.5 L1611.7 772.2 L1608.9 768.9 L1605.7 765.8 L1602.2 762.8 L1598.4 759.9 L1594.4 757.2 L1590.0 754.6 L1585.4 752.2 L1580.6 750.0 L1575.6 748.0 L1570.4 746.1 L1565.0 744.5 L1559.5 743.0 L1553.9 741.8 L1548.2 740.8 L1542.4 740.1 L1536.6 739.5 L1530.8 739.2 L1525.0 739.1 L1519.2 739.3 L1513.5 739.7 L1507.9 740.3 L1502.4 741.1 L1497.0 742.2 L1491.7 743.5ZM1496.6 749.2 L1501.3 748.1 L1506.0 747.2 L1510.9 746.4 L1515.8 745.9 L1520.9 745.5 L1526.0 745.4 L1531.1 745.5 L1536.2 745.7 L1541.3 746.2 L1546.4 746.9 L1551.4 747.8 L1556.4 748.9 L1561.2 750.1 L1565.9 751.6 L1570.5 753.2 L1574.9 755.0 L1579.2 757.0 L1583.2 759.1 L1587.0 761.3 L1590.6 763.7 L1593.9 766.3 L1597.0 768.9 L1599.8 771.7 L1602.3 774.5 L1604.4 777.5 L1606.3 780.5 L1607.9 783.5 L1609.1 786.6 L1610.0 789.7 L1610.5 792.9 L1610.7 796.0 L1610.5 799.1 L1610.0 802.2 L1609.2 805.3 L1608.0 808.2 L1606.4 811.2 L1604.6 814.0 L1602.4 816.8 L1599.9 819.4 L1597.1 821.9 L1594.0 824.3 L1590.6 826.5 L1586.9 828.6 L1583.0 830.5 L1578.9 832.3 L1574.6 833.9 L1570.1 835.2 L299.3 1188.1 L293.8 1189.5 L288.3 1190.6 L282.6 1191.5 L277.0 1192.2 L271.3 1192.6 L265.7 1192.8 L260.0 1192.7 L254.5 1192.3 L249.0 1191.7 L243.7 1190.9 L238.5 1189.8 L233.4 1188.5 L228.5 1186.9 L223.9 1185.1 L219.5 1183.1 L215.3 1180.9 L211.4 1178.5 L207.8 1175.9 L204.4 1173.2 L201.4 1170.3 L198.8 1167.2 L196.4 1164.0 L194.5 1160.7 L192.8 1157.3 L191.6 1153.8 L190.7 1150.2 L190.2 1146.6 L190.1 1143.0 L190.3 1139.3 L190.9 1135.6 L191.9 1132.0 L193.3 1128.3 L195.0 1124.7 L197.0 1121.2 L199.4 1117.7 L202.1 1114.4 L205.2 1111.1 L208.5 1108.0 L212.1 1105.0 L216.0 1102.1 L220.2 1099.4 L224.5 1096.9 L229.1 1094.5 L233.9 1092.3 L238.9 1090.4 L244.0 1088.6 L249.2 1087.1Z" fill="#d97030" fill-rule="evenodd"/>
<path d="M246.6 1081.9 L240.9 1083.6 L235.2 1085.6 L229.8 1087.7 L224.5 1090.1 L219.4 1092.7 L214.6 1095.5 L210.0 1098.5 L205.7 1101.6 L201.7 1105.0 L198.0 1108.4 L194.7 1112.0 L191.7 1115.7 L189.0 1119.5 L186.7 1123.4 L184.9 1127.4 L183.4 1131.4 L182.3 1135.5 L181.6 1139.5 L181.3 1143.6 L181.4 1147.6 L182.0 1151.6 L182.9 1155.6 L184.3 1159.4 L186.1 1163.2 L188.3 1166.9 L190.9 1170.4 L193.8 1173.8 L197.1 1177.0 L200.8 1180.1 L204.8 1182.9 L209.1 1185.6 L213.7 1188.0 L218.6 1190.2 L223.7 1192.2 L229.1 1193.9 L234.7 1195.4 L240.5 1196.6 L246.4 1197.5 L252.4 1198.2 L258.6 1198.6 L264.8 1198.7 L271.0 1198.5 L277.3 1198.0 L283.6 1197.3 L289.8 1196.3 L295.9 1195.0 L301.9 1193.5 L1574.0 839.8 L1579.0 838.3 L1583.8 836.6 L1588.3 834.6 L1592.6 832.5 L1596.7 830.2 L1600.4 827.7 L1603.8 825.1 L1606.9 822.3 L1609.7 819.4 L1612.1 816.4 L1614.2 813.2 L1615.8 810.0 L1617.2 806.7 L1618.1 803.3 L1618.6 799.9 L1618.8 796.4 L1618.6 793.0 L1618.0 789.5 L1617.0 786.1 L1615.7 782.6 L1614.0 779.3 L1611.9 776.0 L1609.5 772.7 L1606.7 769.6 L1603.6 766.6 L1600.3 763.6 L1596.6 760.8 L1592.6 758.2 L1588.4 755.7 L1583.9 753.3 L1579.3 751.2 L1574.4 749.2 L1569.3 747.4 L1564.1 745.8 L1558.8 744.4 L1553.3 743.2 L1547.8 742.3 L1542.2 741.5 L1536.5 741.0 L1530.9 740.7 L1525.2 740.6 L1519.6 740.8 L1514.1 741.1 L1508.6 741.7 L1503.2 742.5 L1498.0 743.6 L1492.9 744.8Z" stroke="#f5d848" stroke-width="1.3" fill="none"/>
<path d="M247.5 1083.7 L241.9 1085.3 L236.5 1087.2 L231.2 1089.3 L226.1 1091.6 L221.2 1094.1 L216.5 1096.8 L212.1 1099.7 L207.9 1102.8 L204.1 1106.0 L200.5 1109.3 L197.2 1112.8 L194.3 1116.4 L191.8 1120.1 L189.6 1123.9 L187.7 1127.7 L186.3 1131.6 L185.2 1135.5 L184.6 1139.5 L184.3 1143.4 L184.4 1147.3 L185.0 1151.2 L185.9 1155.0 L187.3 1158.7 L189.0 1162.4 L191.1 1165.9 L193.6 1169.3 L196.4 1172.6 L199.6 1175.7 L203.2 1178.6 L207.0 1181.4 L211.2 1184.0 L215.7 1186.3 L220.4 1188.5 L225.4 1190.4 L230.6 1192.0 L236.0 1193.5 L241.6 1194.6 L247.3 1195.5 L253.1 1196.2 L259.1 1196.5 L265.1 1196.6 L271.1 1196.5 L277.2 1196.0 L283.3 1195.3 L289.3 1194.4 L295.2 1193.1 L301.0 1191.6 L1572.6 838.2 L1577.5 836.8 L1582.1 835.1 L1586.5 833.2 L1590.7 831.2 L1594.6 828.9 L1598.2 826.5 L1601.5 824.0 L1604.5 821.3 L1607.2 818.5 L1609.5 815.6 L1611.5 812.5 L1613.1 809.4 L1614.4 806.2 L1615.3 802.9 L1615.9 799.6 L1616.0 796.3 L1615.8 792.9 L1615.2 789.6 L1614.3 786.2 L1613.0 782.9 L1611.3 779.7 L1609.3 776.5 L1607.0 773.4 L1604.3 770.3 L1601.4 767.4 L1598.1 764.5 L1594.5 761.8 L1590.7 759.3 L1586.6 756.8 L1582.3 754.6 L1577.8 752.5 L1573.1 750.6 L1568.2 748.8 L1563.1 747.3 L1557.9 745.9 L1552.7 744.8 L1547.3 743.9 L1541.9 743.1 L1536.4 742.6 L1530.9 742.3 L1525.5 742.3 L1520.0 742.4 L1514.7 742.8 L1509.4 743.3 L1504.2 744.1 L1499.1 745.1 L1494.2 746.3Z" stroke="#d42c40" stroke-width="2.2" fill="none"/>
<path d="M248.4 1085.5 L243.0 1087.1 L237.7 1088.9 L232.6 1090.9 L227.7 1093.1 L222.9 1095.6 L218.4 1098.2 L214.1 1101.0 L210.1 1103.9 L206.4 1107.0 L202.9 1110.3 L199.8 1113.6 L197.0 1117.1 L194.5 1120.7 L192.4 1124.3 L190.6 1128.0 L189.2 1131.8 L188.2 1135.6 L187.6 1139.4 L187.3 1143.2 L187.5 1146.9 L188.0 1150.7 L188.9 1154.4 L190.2 1158.0 L191.9 1161.5 L193.9 1164.9 L196.3 1168.2 L199.1 1171.4 L202.1 1174.4 L205.6 1177.2 L209.3 1179.9 L213.3 1182.4 L217.7 1184.6 L222.2 1186.7 L227.0 1188.6 L232.1 1190.2 L237.3 1191.5 L242.7 1192.7 L248.2 1193.5 L253.8 1194.1 L259.6 1194.5 L265.4 1194.6 L271.2 1194.4 L277.1 1194.0 L282.9 1193.3 L288.7 1192.4 L294.5 1191.2 L300.1 1189.8 L1571.3 836.7 L1576.0 835.2 L1580.4 833.6 L1584.7 831.8 L1588.7 829.8 L1592.5 827.7 L1596.0 825.4 L1599.2 822.9 L1602.1 820.3 L1604.7 817.6 L1606.9 814.7 L1608.8 811.8 L1610.4 808.8 L1611.7 805.7 L1612.5 802.5 L1613.1 799.4 L1613.2 796.1 L1613.0 792.9 L1612.5 789.7 L1611.6 786.4 L1610.3 783.2 L1608.7 780.1 L1606.8 777.0 L1604.5 774.0 L1601.9 771.0 L1599.1 768.2 L1595.9 765.5 L1592.5 762.8 L1588.8 760.4 L1584.8 758.0 L1580.7 755.8 L1576.3 753.8 L1571.7 751.9 L1567.0 750.3 L1562.1 748.8 L1557.1 747.5 L1552.0 746.4 L1546.8 745.5 L1541.6 744.8 L1536.3 744.3 L1531.0 744.0 L1525.7 743.9 L1520.5 744.0 L1515.3 744.4 L1510.2 744.9 L1505.1 745.7 L1500.2 746.7 L1495.5 747.9Z" stroke="#f5d848" stroke-width="1.3" fill="none"/>
<path d="M1666.5 873.0L1644.2 944.1" stroke="#00c400" stroke-width="4.5" fill="none"/>
<path d="M1637.6 965.3L1638.5 942.3L1650.0 945.9Z" fill="#00b000"/>
<path d="M1666.5 873.0L1677.4 778.6" stroke="#0000b0" stroke-width="5.5" fill="none"/>
<path d="M1679.4 758.0L1671.6 779.1L1683.2 779.1Z" fill="#0000c0"/>
</svg>
<svg width="1948" height="1992" viewBox="0 0 1948 1992">
<rect x="2.0" y="92.0" width="774.0" height="822.0" rx="0.0" fill="#282828" fill-opacity="0.633"/>
<path d="M775.4 92V913.4H2" fill="none" stroke="#8a8a96" stroke-opacity="0.5" stroke-width="1.2"/>
<rect x="2.0" y="50.0" width="774.0" height="42.0" rx="0.0" fill="#080808" />
<path d="M15.5 62H36.5L26 80Z" fill="#ffffff"/>
<text x="50.0" y="79.6" font-size="21.90" fill="#ffffff" letter-spacing="0.305">Legend</text>
<rect x="18.0" y="108.0" width="699.0" height="42.0" rx="0.0" fill="#262626" />
<rect x="717.0" y="108.0" width="42.0" height="42.0" rx="0.0" fill="#a85b2f" />
<path d="M727.5 120H748.5L738 138Z" fill="#ffffff"/>
<text x="26.8" y="137.8" font-size="21.90" fill="#ffffff" letter-spacing="0.487">Feature type</text>
<text x="353.0" y="182.4" font-size="21.90" fill="#ffffff" letter-spacing="0.612">Time</text>
<text x="442.6" y="182.4" font-size="21.90" fill="#ffffff" letter-spacing="0.459">Percentage</text>
<text x="595.0" y="182.4" font-size="21.90" fill="#ffffff" letter-spacing="0.747">Used filament</text>
<rect x="10.0" y="195.5" width="758.0" height="1.6" rx="0.0" fill="#e8813f" />
<rect x="18.5" y="205.0" width="28.5" height="28.0" rx="0.0" fill="#ffe64d" />
<text x="64.2" y="227.9" font-size="21.90" fill="#ffffff" letter-spacing="0.830">Perimeter</text>
<text x="353.0" y="227.9" font-size="21.90" fill="#ffffff" letter-spacing="0.808">1h19m</text>
<rect x="442.0" y="206.0" width="34.4" height="26.0" rx="0.0" fill="#ec8244" />
<text x="518.6" y="227.9" font-size="21.90" fill="#ffffff" letter-spacing="-0.419">16.6%</text>
<text x="595.3" y="227.9" font-size="21.90" fill="#ffffff" letter-spacing="0.275">4.88 m</text>
<text x="684.8" y="227.9" font-size="21.90" fill="#ffffff" letter-spacing="0.176">14.55 g</text>
<rect x="18.5" y="243.0" width="28.5" height="28.0" rx="0.0" fill="#ff7d38" />
<text x="64.2" y="265.9" font-size="21.90" fill="#ffffff" letter-spacing="0.793">External perimeter</text>
<text x="353.0" y="265.9" font-size="21.90" fill="#ffffff" letter-spacing="0.808">2h17m</text>
<rect x="442.0" y="244.0" width="60.2" height="26.0" rx="0.0" fill="#ec8244" />
<text x="518.6" y="265.9" font-size="21.90" fill="#ffffff" letter-spacing="-0.419">29.0%</text>
<text x="595.3" y="265.9" font-size="21.90" fill="#ffffff" letter-spacing="0.275">5.08 m</text>
<text x="684.8" y="265.9" font-size="21.90" fill="#ffffff" letter-spacing="0.176">15.15 g</text>
<rect x="18.5" y="281.0" width="28.5" height="28.0" rx="0.0" fill="#1f1fff" />
<text x="64.2" y="303.9" font-size="21.90" fill="#ffffff" letter-spacing="0.930">Overhang perimeter</text>
<text x="353.0" y="303.9" font-size="21.90" fill="#ffffff" letter-spacing="0.064">26s</text>
<rect x="442.0" y="282.0" width="1.3" height="26.0" rx="0.0" fill="#ec8244" />
<text x="518.6" y="303.9" font-size="21.90" fill="#ffffff" letter-spacing="-0.479">0.1%</text>
<text x="595.3" y="303.9" font-size="21.90" fill="#ffffff" letter-spacing="0.275">0.01 m</text>
<text x="684.8" y="303.9" font-size="21.90" fill="#ffffff" letter-spacing="0.019">0.03 g</text>
<rect x="18.5" y="319.0" width="28.5" height="28.0" rx="0.0" fill="#b03029" />
<text x="64.2" y="341.9" font-size="21.90" fill="#ffffff" letter-spacing="0.923">Internal infill</text>
<text x="353.0" y="341.9" font-size="21.90" fill="#ffffff" letter-spacing="0.808">1h55m</text>
<rect x="442.0" y="320.0" width="50.4" height="26.0" rx="0.0" fill="#ec8244" />
<text x="518.6" y="341.9" font-size="21.90" fill="#ffffff" letter-spacing="-0.419">24.3%</text>
<text x="595.3" y="341.9" font-size="21.90" fill="#ffffff" letter-spacing="0.275">3.93 m</text>
<text x="684.8" y="341.9" font-size="21.90" fill="#ffffff" letter-spacing="0.409">11.72 g</text>
<rect x="18.5" y="357.0" width="28.5" height="28.0" rx="0.0" fill="#9654cc" />
<text x="64.2" y="379.9" font-size="21.90" fill="#ffffff" letter-spacing="0.541">Solid infill</text>
<text x="353.0" y="379.9" font-size="21.90" fill="#ffffff" letter-spacing="0.788">4m</text>
<rect x="442.0" y="358.0" width="1.9" height="26.0" rx="0.0" fill="#ec8244" />
<text x="518.6" y="379.9" font-size="21.90" fill="#ffffff" letter-spacing="-0.479">0.9%</text>
<text x="595.3" y="379.9" font-size="21.90" fill="#ffffff" letter-spacing="0.275">0.35 m</text>
<text x="684.8" y="379.9" font-size="21.90" fill="#ffffff" letter-spacing="0.019">1.03 g</text>
<rect x="18.5" y="395.0" width="28.5" height="28.0" rx="0.0" fill="#f04040" />
<text x="64.2" y="417.9" font-size="21.90" fill="#ffffff" letter-spacing="0.748">Top solid infill</text>
<text x="353.0" y="417.9" font-size="21.90" fill="#ffffff" letter-spacing="0.788">1m</text>
<rect x="442.0" y="396.0" width="1.3" height="26.0" rx="0.0" fill="#ec8244" />
<text x="518.6" y="417.9" font-size="21.90" fill="#ffffff" letter-spacing="-0.479">0.2%</text>
<text x="595.3" y="417.9" font-size="21.90" fill="#ffffff" letter-spacing="0.275">0.03 m</text>
<text x="684.8" y="417.9" font-size="21.90" fill="#ffffff" letter-spacing="0.019">0.10 g</text>
<rect x="18.5" y="433.0" width="28.5" height="28.0" rx="0.0" fill="#4d80ba" />
<text x="64.2" y="455.9" font-size="21.90" fill="#ffffff" letter-spacing="0.776">Bridge infill</text>
<text x="353.0" y="455.9" font-size="21.90" fill="#ffffff" letter-spacing="0.064">15s</text>
<rect x="442.0" y="434.0" width="1.3" height="26.0" rx="0.0" fill="#ec8244" />
<text x="518.6" y="455.9" font-size="21.90" fill="#ffffff" letter-spacing="-0.479">0.1%</text>
<text x="595.3" y="455.9" font-size="21.90" fill="#ffffff" letter-spacing="0.275">0.00 m</text>
<text x="684.8" y="455.9" font-size="21.90" fill="#ffffff" letter-spacing="0.019">0.01 g</text>
<rect x="18.5" y="471.0" width="28.5" height="28.0" rx="0.0" fill="#00876e" />
<text x="64.2" y="493.9" font-size="21.90" fill="#ffffff" letter-spacing="0.880">Skirt/Brim</text>
<text x="353.0" y="493.9" font-size="21.90" fill="#ffffff" letter-spacing="0.064">59s</text>
<rect x="442.0" y="472.0" width="1.3" height="26.0" rx="0.0" fill="#ec8244" />
<text x="518.6" y="493.9" font-size="21.90" fill="#ffffff" letter-spacing="-0.479">0.2%</text>
<text x="595.3" y="493.9" font-size="21.90" fill="#ffffff" letter-spacing="0.275">0.05 m</text>
<text x="684.8" y="493.9" font-size="21.90" fill="#ffffff" letter-spacing="0.019">0.15 g</text>
<rect x="18.5" y="509.0" width="28.5" height="28.0" rx="0.0" fill="#00ff00" />
<text x="64.2" y="531.9" font-size="21.90" fill="#ffffff" letter-spacing="0.851">Support material</text>
<text x="353.0" y="531.9" font-size="21.90" fill="#ffffff" letter-spacing="0.808">1h13m</text>
<rect x="442.0" y="510.0" width="32.2" height="26.0" rx="0.0" fill="#ec8244" />
<text x="518.6" y="531.9" font-size="21.90" fill="#ffffff" letter-spacing="-0.419">15.5%</text>
<text x="595.3" y="531.9" font-size="21.90" fill="#ffffff" letter-spacing="0.275">3.31 m</text>
<text x="684.8" y="531.9" font-size="21.90" fill="#ffffff" letter-spacing="0.019">9.89 g</text>
<rect x="18.5" y="547.0" width="28.5" height="28.0" rx="0.0" fill="#008000" />
<text x="64.2" y="569.9" font-size="21.90" fill="#ffffff" letter-spacing="0.801">Support material interface</text>
<text x="353.0" y="569.9" font-size="21.90" fill="#ffffff" letter-spacing="0.788">5m</text>
<rect x="442.0" y="548.0" width="2.5" height="26.0" rx="0.0" fill="#ec8244" />
<text x="518.6" y="569.9" font-size="21.90" fill="#ffffff" letter-spacing="-0.479">1.2%</text>
<text x="595.3" y="569.9" font-size="21.90" fill="#ffffff" letter-spacing="0.275">0.13 m</text>
<text x="684.8" y="569.9" font-size="21.90" fill="#ffffff" letter-spacing="0.019">0.39 g</text>
<rect x="18.5" y="585.0" width="28.5" height="28.0" rx="0.0" fill="#5ed194" />
<text x="64.2" y="607.9" font-size="21.90" fill="#ffffff" letter-spacing="0.591">Custom</text>
<text x="353.0" y="607.9" font-size="21.90" fill="#ffffff" letter-spacing="-0.264">6s</text>
<rect x="442.0" y="586.0" width="1.3" height="26.0" rx="0.0" fill="#ec8244" />
<text x="518.6" y="607.9" font-size="21.90" fill="#ffffff" letter-spacing="-0.479">0.0%</text>
<text x="595.3" y="607.9" font-size="21.90" fill="#ffffff" letter-spacing="0.275">0.02 m</text>
<text x="684.8" y="607.9" font-size="21.90" fill="#ffffff" letter-spacing="0.019">0.06 g</text>
<text x="18.6" y="653.7" font-size="21.90" fill="#ffffff" letter-spacing="0.867">Estimated printing times [Normal mode]:</text>
<rect x="10.0" y="668.3" width="758.0" height="1.6" rx="0.0" fill="#e8813f" />
<text x="18.6" y="703.4" font-size="21.90" fill="#e8813f" letter-spacing="0.349">First layer:</text>
<text x="142.9" y="703.4" font-size="21.90" fill="#ffffff" letter-spacing="0.433">10m</text>
<text x="18.6" y="741.2" font-size="21.90" fill="#e8813f" letter-spacing="0.676">Total:</text>
<text x="142.9" y="741.2" font-size="21.90" fill="#ffffff" letter-spacing="0.668">7h54m</text>
<rect x="18.0" y="760.0" width="215.0" height="42.0" rx="0.0" fill="#a85b2f" />
<text x="26.4" y="788.9" font-size="21.90" fill="#ffffff" letter-spacing="0.650">Show stealth mode</text>
<rect x="10.0" y="817.5" width="758.0" height="1.6" rx="0.0" fill="#e8813f" />
<g fill="none" stroke="#f07318" stroke-width="1.6">
<path d="M27.6 882C23 875 20.3 871.5 20.3 867.8a7.3 7.3 0 0 1 14.6 0C34.9 871.5 32.2 875 27.6 882Z"/><circle cx="27.6" cy="867.6" r="2.3"/>
<path d="M55.2 858.5C52.3 854 50.4 852 50.4 849.6a4.8 4.8 0 0 1 9.6 0C60 852 58.1 854 55.2 858.5Z"/><circle cx="55.2" cy="849.5" r="1.5"/></g>
<path d="M28 883.5H52a4.6 4.6 0 0 0 0 -9.2H44a4.6 4.6 0 0 1 0 -9.2H55a4.4 4.4 0 0 0 0 -8.8H48" fill="none" stroke="#fff" stroke-width="1.7" stroke-dasharray="2.6 1.7"/>
<path d="M80.5 852c1-5 7-6 12-5 5-3 12-3 15 1 6 1 12 2 13.5 8 1.5 5-3 9-5 13-1 6-2 11-6 12-5 1-10 0-15 0-5 0-12 2-14-2-2-5 1-10 0.5-15-0.3-4-1.500-8-1-12Z" fill="#ffffff"/>
<path d="M101.500 884.5c-4-1-6-6-8-10l-5-10c-1-2 1-3.500 3-2l4.500 5.500V853c0-2.500 3.500-2.500 3.500 0v-3c0-2.600 3.700-2.600 3.700 0v2c0-2.500 3.600-2.500 3.600 0v3c0-2.300 3.400-2.300 3.400 0v18c0 6-1.500 11-5 11.500-3 0.400-5.200 0.400-8.700 0Z" fill="#f07318"/>
<path d="M150.0 858.5L162.5 845.5L175.0 858.5" fill="none" stroke="#f07318" stroke-width="2.3" stroke-linecap="round"/>
<path d="M150.0 868.2L162.5 855.2L175.0 868.2" fill="none" stroke="#f07318" stroke-width="2.3" stroke-linecap="round"/>
<path d="M150.0 877.9L162.5 864.9L175.0 877.9" fill="none" stroke="#f07318" stroke-width="2.3" stroke-linecap="round"/>
<rect x="144.0" y="880.2" width="37.0" height="4.8" rx="0.0" fill="#d020e0" />
<path d="M211.0 845.5L223.5 858.5L236.0 845.5" fill="none" stroke="#f07318" stroke-width="2.3" stroke-linecap="round"/>
<path d="M211.0 855.2L223.5 868.2L236.0 855.2" fill="none" stroke="#f07318" stroke-width="2.3" stroke-linecap="round"/>
<path d="M211.0 864.9L223.5 877.9L236.0 864.9" fill="none" stroke="#f07318" stroke-width="2.3" stroke-linecap="round"/>
<rect x="205.0" y="880.2" width="37.0" height="4.8" rx="0.0" fill="#40b0d6" />
<g transform="translate(284.5 863) rotate(-42)" fill="none" stroke="#fff" stroke-width="3.2" stroke-linecap="round"><path d="M-2.800 -5.800H-9a5.800 5.800 0 0 0 0 11.600H-5"/><path d="M2.800 5.800H9a5.800 5.800 0 0 0 0 -11.600H5"/></g>
<g stroke="#fff" stroke-width="2.4" stroke-linecap="round"><path d="M272.8 850.500l2.800 1.400M277.500 847l1.500 3M270.500 856.500l3.200 0.600M296.500 876.500l-2.800 -1.400M291.800 880l-1.500 -3M298.500 870.500l-3.200 -0.600"/></g>
<rect x="266.4" y="879.4" width="35.6" height="4.7" rx="0.0" fill="#e9e1ea" />
<path d="M330 845.500h10.500v12h3.200v6.500h-4.200l-4.300 5.500-4.200-5.500h-4.200v-6.500h3.200Z" fill="#fff"/>
<path d="M347.500 851h11.500v15h2.800v7h-4.500l-4 5.500-4-5.500h-4.500v-7h2.700Z" fill="#f07318"/>
<path d="M337 871q4 6.500 11 6.500" fill="none" stroke="#fff" stroke-width="1.300"/><path d="M335.800 872.800l0.600-3.200 2.600 1.900ZM349.500 877.200l-3-1.500 0.300 3.200Z" fill="#fff"/>
<rect x="328.5" y="880.2" width="34.5" height="4.8" rx="0.0" fill="#c1c25c" />
<circle cx="406.9" cy="855.2" r="10.2" fill="#3cb4f2"/><circle cx="399.600" cy="867.600" r="10.2" fill="#f63d84"/><circle cx="414" cy="867.600" r="10.2" fill="#fdc83a"/>
<path d="M406.9 862a10 10 0 0 1 0 6 10 10 0 0 1 -6 -4 10 10 0 0 1 6 -2Z" fill="#1a5a9a"/>
<ellipse cx="402.500" cy="860.800" rx="3.800" ry="4.600" fill="#2868b0" fill-opacity="0.85"/><ellipse cx="411.400" cy="860.800" rx="3.800" ry="4.600" fill="#70b850" fill-opacity="0.9"/><ellipse cx="406.800" cy="868.800" rx="3.800" ry="5" fill="#f87838" fill-opacity="0.9"/><circle cx="406.800" cy="863.800" r="2.800" fill="#0e3f78"/>
<rect x="388.5" y="880.1" width="36.4" height="4.8" rx="0.0" fill="#e3a08f" />
<g fill="none" stroke="#fff" stroke-width="2.2"><path d="M457.500 847.200h20.500M457.500 875.200h20.500" stroke-width="2.600"/><path d="M459.800 848v4.500c0 4.500 7.800 6 7.800 9s-7.800 4.500-7.800 9v4.500M475.600 848v4.500c0 4.500 -7.800 6 -7.800 9s7.800 4.500 7.800 9v4.500"/></g>
<path d="M462.800 857.200h9.800l-4.900 3.300ZM462 873.600c1.500-3.200 9.800-3.200 11.400 0Z" fill="#f07318"/>
<rect x="450.4" y="880.2" width="34.6" height="4.8" rx="0.0" fill="#50f27e" />
<path d="M538.2 852.0 L539.0 854.5 L535.8 857.0 L535.6 858.9 L538.2 862.0 L537.0 864.2 L533.0 863.8 L531.5 865.0 L531.2 869.0 L528.7 869.8 L526.2 866.6 L524.3 866.4 L521.2 869.0 L519.0 867.8 L519.4 863.8 L518.2 862.3 L514.2 862.0 L513.4 859.5 L516.6 857.0 L516.8 855.1 L514.2 852.0 L515.4 849.8 L519.4 850.2 L520.9 849.0 L521.2 845.0 L523.7 844.2 L526.2 847.4 L528.1 847.6 L531.2 845.0 L533.4 846.2 L533.0 850.2 L534.2 851.7Z M526.2 851.8 a5.2 5.2 0 1 0 0.100 0Z" fill="#f07318" fill-rule="evenodd"/>
<path d="M524 848l26 0 0 42 -32 0 0 -20 8 -8Z" fill="none"/>
<g transform="translate(533.500 866.500) rotate(-45)"><rect x="-19" y="-5.500" width="38" height="11" fill="#2b2b2b" fill-opacity="0.0"/><path d="M-9.500 -3.700H10.500V3.700H-9.500Z" fill="#fff"/><path d="M12.300 -3.700h3.200a1.500 1.500 0 0 1 1.500 1.500v4.400a1.500 1.500 0 0 1 -1.500 1.500h-3.200Z" fill="#fff"/><path d="M-11 -3.500L-17.500 0L-11 3.500Z" fill="#fff"/></g>
<rect x="511.4" y="880.2" width="34.6" height="4.8" rx="0.0" fill="#eedc3c" />
<circle cx="589.500" cy="864" r="19.600" fill="#000"/><path d="M589.500 864V844.400A19.600 19.600 0 0 0 569.900 864ZM589.500 864V883.600A19.600 19.600 0 0 0 609.100 864Z" fill="#fff"/>
<g fill="none" stroke="#fff" stroke-width="2.300" stroke-linejoin="round"><path d="M650.5 843.0L669.2 853.6L669.2 874.8L650.5 885.4L631.8 874.8L631.8 853.6Z"/><path d="M631.8 853.6L650.5 863.7L669.2 853.6M650.5 863.7V885.4"/></g>
<g fill="none" stroke="#fff" stroke-width="1.500" stroke-dasharray="3 2.200"><path d="M650.5 843.0V864.2M650.5 864.7L631.8 874.8M650.5 864.7L669.2 874.8"/></g>
<rect x="690.0" y="843.0" width="43.0" height="43.0" rx="0.0" fill="none" stroke="#e8813f" stroke-width="1.3" />
<path d="M703.400 843.800H719V871H723V878.200H716L711.200 885 706.400 878.200H699.400V871H703.400Z" fill="#fff"/>
<path d="M2 1774H271a9 9 0 0 1 9 9V1921H2Z" fill="#444444"/>
<g fill="none" stroke="#fff" stroke-width="3" stroke-linejoin="round"><path d="M20.500 1824.500H102.500V1904H20.500Z"/><path d="M20.500 1824.500L53.500 1792.500H132V1875L102.500 1904"/><path d="M102.500 1824.500L132 1792.500"/></g>
<rect x="142.0" y="1784.0" width="128.0" height="128.0" rx="0.0" fill="#212121" />
<g fill="none" stroke="#fff" stroke-width="3" stroke-linejoin="round" stroke-linecap="round">
<path d="M150.500 1823.500L183.500 1795H262L232.500 1823.500Z"/>
<path d="M150.500 1833.5H232.500L262 1805.0"/>
<path d="M150.500 1843.5H232.500L262 1815.0"/>
<path d="M150.500 1853.5H232.500L262 1825.0"/>
<path d="M150.500 1863.5H232.500L262 1835.0"/>
<path d="M150.500 1873.5H232.500L262 1845.0"/>
<path d="M150.500 1883.5H232.500L262 1855.0"/>
<path d="M150.500 1893.5H232.500L262 1865.0"/>
<path d="M150.500 1903.5H232.500L262 1875.0"/>
</g>
</svg>
</body></html>
